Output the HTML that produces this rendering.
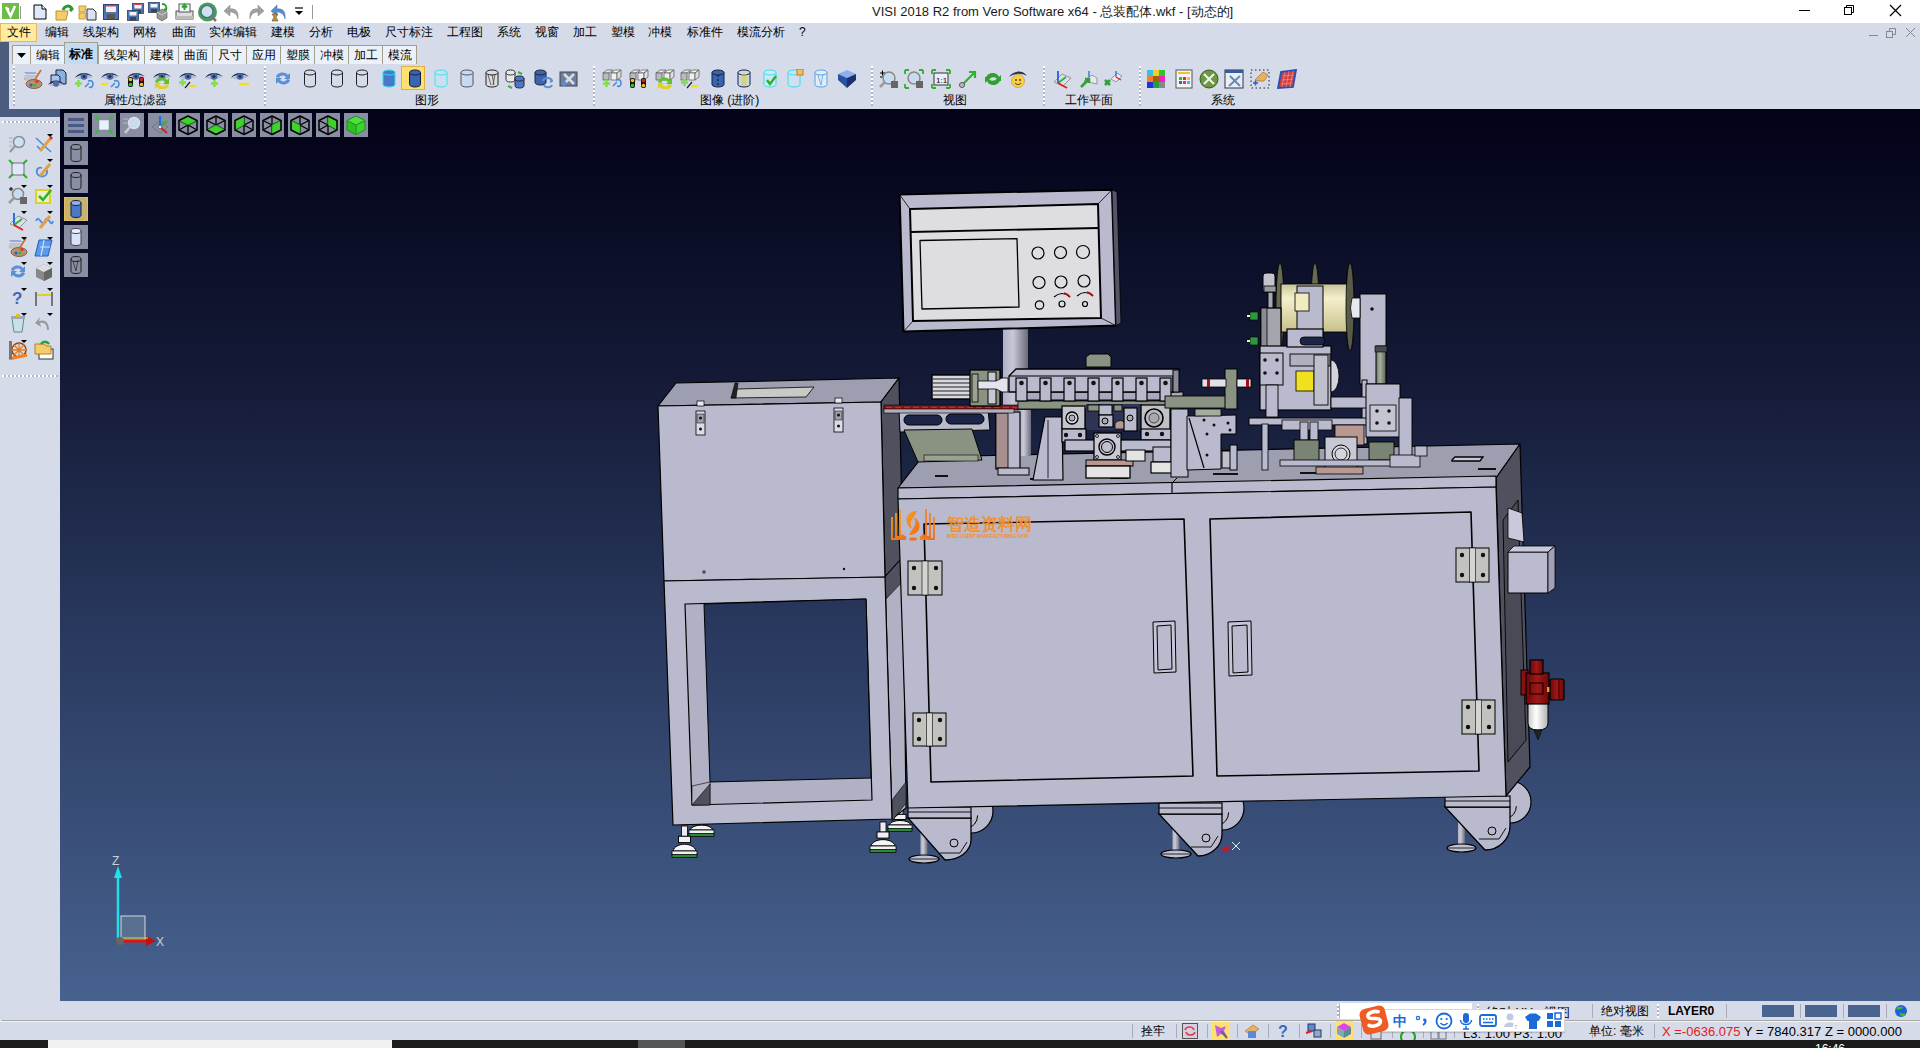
<!DOCTYPE html>
<html><head><meta charset="utf-8">
<style>
*{margin:0;padding:0;box-sizing:border-box}
html,body{width:1920px;height:1048px;overflow:hidden;background:#d6dbe9;font-family:"Liberation Sans",sans-serif;font-size:12px;color:#000}
.a{position:absolute}
.t{position:absolute;white-space:nowrap;line-height:1}
#vp{left:60px;top:109px;width:1860px;height:892px;background:linear-gradient(#020218 0%,#141a36 30%,#2a3a60 60%,#47628f 100%)}
.tab{position:absolute;top:45px;height:19px;background:#eaf1fa;border-left:1px solid #a39f8a;border-top:1px solid #a39f8a;font-size:12px;text-align:center;line-height:18px}
.grip{position:absolute;top:66px;height:40px;width:2px;background:repeating-linear-gradient(#fff 0 2px,#b0b4c4 2px 4px)}
.grh{position:absolute;height:2px;background:repeating-linear-gradient(90deg,#fff 0 2px,#b0b4c4 2px 4px)}
.lbl{position:absolute;top:93px;font-size:12px;line-height:14px;white-space:nowrap}
.sep{position:absolute;width:1px;background:#9ea3b3}
.vb{position:absolute;width:24px;height:24px;background:#8a8ea2}
.ic{position:absolute}

</style></head><body>
<div class="a" style="left:0px;top:0px;width:1920px;height:23px;background:#fff;"></div>
<div class="t" style="left:872px;top:5px;font-size:13px;color:#1a1a1a;">VISI 2018 R2 from Vero Software x64 - 总装配体.wkf - [动态的]</div>
<div class="a" style="left:1799px;top:10px;width:11px;height:1px;background:#000;"></div>
<svg class="ic" style="left:1843px;top:4px" width="12" height="12" viewBox="0 0 12 12"><rect x="1.5" y="3.5" width="7" height="7" fill="none" stroke="#000"/><path d="M3.5 3.5V1.5h7v7h-2" fill="none" stroke="#000"/></svg>
<svg class="ic" style="left:1889px;top:4px" width="13" height="13" viewBox="0 0 13 13"><path d="M1 1L12 12M12 1L1 12" stroke="#000" stroke-width="1.2"/></svg>
<svg class="ic" style="left:2px;top:3px" width="17" height="16" viewBox="0 0 17 16"><rect width="17" height="16" fill="#6cbd45"/><path d="M4 4l4.5 9L13 3" stroke="#fff" stroke-width="2.6" fill="none"/><circle cx="6" cy="6" r="1.3" fill="#fff"/></svg>
<div class="a" style="left:20px;top:6px;width:1px;height:13px;background:#999;"></div>
<svg class="ic" style="left:33px;top:4px" width="14" height="16" viewBox="0 0 14 16"><path d="M1 1h8l4 4v10H1z" fill="#dfe8f8" stroke="#000"/><path d="M9 1v4h4" fill="#fff" stroke="#000"/></svg>
<svg class="ic" style="left:55px;top:3px" width="19" height="18" viewBox="0 0 19 18"><path d="M1 8h12l-2 9H1z" fill="#f4cc6a" stroke="#c09030"/><path d="M8 7c2-5 7-5 9-1l-2 2" stroke="#2a9a2a" stroke-width="3" fill="none"/></svg>
<svg class="ic" style="left:78px;top:3px" width="19" height="18" viewBox="0 0 19 18"><path d="M1 3h7l-1 6H1zM1 10h7l-1 6H1z" fill="#f4cc6a" stroke="#c0a040"/><path d="M9 6h6l3 3v8H9z" fill="#d8e2f4" stroke="#333"/></svg>
<svg class="ic" style="left:103px;top:4px" width="16" height="16" viewBox="0 0 16 16"><rect x="0.5" y="0.5" width="15" height="15" fill="#4e73b0" stroke="#2a4070"/><rect x="3" y="1" width="10" height="7" fill="#f0f0f0"/><rect x="3" y="1" width="10" height="1.5" fill="#e04040"/><rect x="4" y="10" width="8" height="5" fill="#555"/></svg>
<svg class="ic" style="left:127px;top:2px" width="17" height="19" viewBox="0 0 17 19"><g transform="translate(5,1) scale(1)"><rect x="0.5" y="0.5" width="11" height="10" fill="#4e73b0" stroke="#2a4070" stroke-width="0.8"/><rect x="2.5" y="1" width="7" height="4.5" fill="#f4f4f4"/><rect x="2.5" y="1" width="7" height="1" fill="#e04040"/><rect x="3" y="7" width="6" height="3.5" fill="#444"/></g><g transform="translate(0,8) scale(1)"><rect x="0.5" y="0.5" width="11" height="10" fill="#4e73b0" stroke="#2a4070" stroke-width="0.8"/><rect x="2.5" y="1" width="7" height="4.5" fill="#f4f4f4"/><rect x="2.5" y="1" width="7" height="1" fill="#e04040"/><rect x="3" y="7" width="6" height="3.5" fill="#444"/></g></svg>
<svg class="ic" style="left:148px;top:2px" width="21" height="20" viewBox="0 0 21 20"><g transform="translate(0,0) scale(1)"><rect x="0.5" y="0.5" width="11" height="10" fill="#4e73b0" stroke="#2a4070" stroke-width="0.8"/><rect x="2.5" y="1" width="7" height="4.5" fill="#f4f4f4"/><rect x="2.5" y="1" width="7" height="1" fill="#e04040"/><rect x="3" y="7" width="6" height="3.5" fill="#444"/></g><path d="M9 10l5-3 5 3v6l-5 3-5-3z" fill="#999" stroke="#555" stroke-width="0.6"/><path d="M9 10l5 3 5-3" fill="none" stroke="#ddd" stroke-width="0.8"/><path d="M14 2c4 0 5 3 4 6l-2-1" stroke="#2a9a2a" stroke-width="1.8" fill="none"/></svg>
<svg class="ic" style="left:175px;top:2px" width="19" height="19" viewBox="0 0 19 19"><rect x="1" y="9" width="17" height="8" fill="#ddd" stroke="#555"/><rect x="1" y="14" width="17" height="3" fill="#bbb"/><rect x="4" y="2" width="11" height="8" fill="#f4f8ff" stroke="#555"/><path d="M9.5 8V3M7 5.5l2.5-3 2.5 3" stroke="#20b020" stroke-width="2" fill="none"/></svg>
<svg class="ic" style="left:197px;top:2px" width="21" height="20" viewBox="0 0 21 20"><circle cx="10.5" cy="10" r="9.5" fill="#4a9a5a"/><circle cx="10" cy="9.5" r="6" fill="#cfe0f0" stroke="#3a6a8a" stroke-width="1.2"/><path d="M14 14l5 5" stroke="#777" stroke-width="2.5"/></svg>
<svg class="ic" style="left:223px;top:2px" width="18" height="19" viewBox="0 0 18 19"><path d="M15 17c1-7-2-11-8-10V3L1 9l6 5v-4c4 0 7 2 8 7z" fill="#a0a0a0" stroke="#888" stroke-width="0.5"/></svg>
<svg class="ic" style="left:247px;top:2px" width="18" height="19" viewBox="0 0 18 19"><path d="M3 17c-1-7 2-11 8-10V3l6 6-6 5v-4c-4 0-7 2-8 7z" fill="#a0a0a0" stroke="#888" stroke-width="0.5"/></svg>
<svg class="ic" style="left:269px;top:2px" width="20" height="20" viewBox="0 0 20 20"><path d="M16 17c1-7-2-11-8-10V3L2 9l6 5v-4c4 0 7 2 8 7z" fill="#5a8ad0" stroke="#4070b0" stroke-width="0.5"/><path d="M3 12h6l-2 3 2 4H3l2-4z" fill="#b89050" stroke="#705020" stroke-width="0.6"/></svg>
<svg class="ic" style="left:294px;top:7px" width="10" height="9" viewBox="0 0 10 9"><path d="M1 1h8" stroke="#000" stroke-width="1.2"/><path d="M1 4h8L5 8z" fill="#000"/></svg>
<div class="a" style="left:312px;top:5px;width:1px;height:14px;background:#999;"></div>
<div class="a" style="left:0px;top:23px;width:1920px;height:19px;background:#d6dbe9;"></div>
<div class="a" style="left:0px;top:23px;width:37px;height:19px;background:#ffeba0;border:1px solid #e8b860"></div>
<div class="t" style="left:7px;top:26px;font-size:12px;color:#000;">文件</div>
<div class="t" style="left:45px;top:26px;font-size:12px;color:#000;">编辑</div>
<div class="t" style="left:83px;top:26px;font-size:12px;color:#000;">线架构</div>
<div class="t" style="left:133px;top:26px;font-size:12px;color:#000;">网格</div>
<div class="t" style="left:172px;top:26px;font-size:12px;color:#000;">曲面</div>
<div class="t" style="left:209px;top:26px;font-size:12px;color:#000;">实体编辑</div>
<div class="t" style="left:271px;top:26px;font-size:12px;color:#000;">建模</div>
<div class="t" style="left:309px;top:26px;font-size:12px;color:#000;">分析</div>
<div class="t" style="left:347px;top:26px;font-size:12px;color:#000;">电极</div>
<div class="t" style="left:385px;top:26px;font-size:12px;color:#000;">尺寸标注</div>
<div class="t" style="left:447px;top:26px;font-size:12px;color:#000;">工程图</div>
<div class="t" style="left:497px;top:26px;font-size:12px;color:#000;">系统</div>
<div class="t" style="left:535px;top:26px;font-size:12px;color:#000;">视窗</div>
<div class="t" style="left:573px;top:26px;font-size:12px;color:#000;">加工</div>
<div class="t" style="left:611px;top:26px;font-size:12px;color:#000;">塑模</div>
<div class="t" style="left:648px;top:26px;font-size:12px;color:#000;">冲模</div>
<div class="t" style="left:687px;top:26px;font-size:12px;color:#000;">标准件</div>
<div class="t" style="left:737px;top:26px;font-size:12px;color:#000;">模流分析</div>
<div class="t" style="left:799px;top:26px;font-size:12px;color:#000;">?</div>
<div class="a" style="left:1869px;top:35px;width:9px;height:1px;background:#888;"></div>
<svg class="ic" style="left:1886px;top:28px" width="11" height="10" viewBox="0 0 11 10"><rect x="0.5" y="3.5" width="6" height="6" fill="none" stroke="#888"/><path d="M3.5 3.5V0.5h6v6h-3" fill="none" stroke="#888"/></svg>
<svg class="ic" style="left:1905px;top:27px" width="11" height="11" viewBox="0 0 11 11"><path d="M1 1L10 10M10 1L1 10" stroke="#888"/></svg>
<div class="a" style="left:0px;top:42px;width:9px;height:75px;background:#4b5c7e;"></div>
<div class="a" style="left:9px;top:109px;width:51px;height:8px;background:#4b5c7e;"></div>
<div class="tab" style="left:12px;width:18px"><svg width="10" height="6" style="margin-top:6px"><path d="M0 0h9L4.5 5z" fill="#000"/></svg></div>
<div class="tab" style="left:30px;width:34px">编辑</div>
<div class="tab" style="left:64px;top:42px;height:22px;width:34px;background:#c3dcf4;border-right:1px solid #a39f8a;line-height:22px;font-weight:bold">标准</div>
<div class="tab" style="left:98px;width:46px">线架构</div>
<div class="tab" style="left:144px;width:34px">建模</div>
<div class="tab" style="left:178px;width:34px">曲面</div>
<div class="tab" style="left:212px;width:34px">尺寸</div>
<div class="tab" style="left:246px;width:34px">应用</div>
<div class="tab" style="left:280px;width:34px">塑膜</div>
<div class="tab" style="left:314px;width:34px">冲模</div>
<div class="tab" style="left:348px;width:34px">加工</div>
<div class="tab" style="left:382px;width:34px">模流</div>
<div class="a" style="left:416px;top:45px;width:1px;height:19px;background:#a39f8a;"></div>
<div class="grip" style="left:13px"></div>
<div class="grip" style="left:264px"></div>
<div class="grip" style="left:593px"></div>
<div class="grip" style="left:871px"></div>
<div class="grip" style="left:1043px"></div>
<div class="grip" style="left:1139px"></div>
<div class="lbl" style="left:104px">属性/过滤器</div>
<div class="lbl" style="left:415px">图形</div>
<div class="lbl" style="left:700px">图像 (进阶)</div>
<div class="lbl" style="left:943px">视图</div>
<div class="lbl" style="left:1065px">工作平面</div>
<div class="lbl" style="left:1211px">系统</div>
<svg class="ic" style="left:23px;top:69px" width="20" height="20" viewBox="0 0 20 20"><path d="M1 3h11l3 2H3z" fill="#9aa8e0"/><path d="M1 6h11l2 2H2z" fill="#c0c0d0"/><path d="M1 9h10l2 2H2z" fill="#d8d8d8" stroke="#888" stroke-width="0.5"/><ellipse cx="11" cy="15" rx="8" ry="4.5" fill="#b89070" stroke="#705040" stroke-width="0.8"/><circle cx="8" cy="16" r="1.6" fill="#2060e0"/><circle cx="12" cy="16" r="1.6" fill="#20c040"/><circle cx="14" cy="12.5" r="1.6" fill="#e03030"/><path d="M18 1L11 12" stroke="#c07030" stroke-width="1.6"/></svg>
<svg class="ic" style="left:48px;top:69px" width="20" height="20" viewBox="0 0 20 20"><path d="M8 1h7l3 3v11H8z" fill="#8ab0e8" stroke="#222"/><path d="M3 6h7l2 2v8H3z" fill="#a8c4f0" stroke="#222"/><g transform="translate(-1,8) scale(0.9)"><path d="M1 9C4 3 14 2 19 8C14 5 6 5 1 9z" fill="#253050"/><path d="M2 9C6 6 14 6 18 8C14 11 6 11 2 9z" fill="#b8bce0"/><circle cx="10" cy="7.5" r="3.3" fill="#4b6c9c"/></g></svg>
<svg class="ic" style="left:74px;top:69px" width="20" height="20" viewBox="0 0 20 20"><g transform="translate(0,0)"><path d="M1 9C4 3 14 2 19 8C14 5 6 5 1 9z" fill="#253050"/><path d="M2 9C6 6 14 6 18 8C14 11 6 11 2 9z" fill="#b8bce0"/><circle cx="10" cy="7.5" r="3.3" fill="#4b6c9c"/><circle cx="10" cy="7.5" r="1.3" fill="#1a2540"/></g><path d="M1 14.5h7M4.5 11v7" stroke="#80e040" stroke-width="2.4"/><path d="M11 18l4-4M14 12c3-1 5 0 5 3s-2 4-4 3" stroke="#4a8ae0" stroke-width="1.6" fill="none"/></svg>
<svg class="ic" style="left:100px;top:69px" width="20" height="20" viewBox="0 0 20 20"><g transform="translate(0,0)"><path d="M1 9C4 3 14 2 19 8C14 5 6 5 1 9z" fill="#253050"/><path d="M2 9C6 6 14 6 18 8C14 11 6 11 2 9z" fill="#b8bce0"/><circle cx="10" cy="7.5" r="3.3" fill="#4b6c9c"/><circle cx="10" cy="7.5" r="1.3" fill="#1a2540"/></g><path d="M1 15h7" stroke="#f0e020" stroke-width="2.4"/><path d="M11 18l4-4M14 12c3-1 5 0 5 3s-2 4-4 3" stroke="#4a8ae0" stroke-width="1.6" fill="none"/></svg>
<svg class="ic" style="left:126px;top:69px" width="20" height="20" viewBox="0 0 20 20"><g transform="translate(0,0)"><path d="M1 9C4 3 14 2 19 8C14 5 6 5 1 9z" fill="#253050"/><path d="M2 9C6 6 14 6 18 8C14 11 6 11 2 9z" fill="#b8bce0"/><circle cx="10" cy="7.5" r="3.3" fill="#4b6c9c"/><circle cx="10" cy="7.5" r="1.3" fill="#1a2540"/></g><rect x="2" y="8" width="5" height="10" rx="2" fill="#111"/><circle cx="4.5" cy="10.5" r="1.8" fill="#f0c020"/><circle cx="4.5" cy="15.5" r="1.8" fill="#20d020"/><rect x="13" y="8" width="5" height="10" rx="2" fill="#111"/><circle cx="15.5" cy="10.5" r="1.8" fill="#e02020"/><circle cx="15.5" cy="15.5" r="1.8" fill="#f0c020"/></svg>
<svg class="ic" style="left:152px;top:69px" width="20" height="20" viewBox="0 0 20 20"><g transform="translate(0,0)"><path d="M1 9C4 3 14 2 19 8C14 5 6 5 1 9z" fill="#253050"/><path d="M2 9C6 6 14 6 18 8C14 11 6 11 2 9z" fill="#b8bce0"/><circle cx="10" cy="7.5" r="3.3" fill="#4b6c9c"/><circle cx="10" cy="7.5" r="1.3" fill="#1a2540"/></g><path d="M3 13c1-5 9-6 12-2l2-2v6h-6l2-2c-2-2-6-2-7 1z" fill="#60c030"/><path d="M17 16c-1 5-9 6-12 2l-2 2v-6h6l-2 2c2 2 6 2 7-1z" fill="#e0d020"/></svg>
<svg class="ic" style="left:178px;top:69px" width="20" height="20" viewBox="0 0 20 20"><g transform="translate(0,0)"><path d="M1 9C4 3 14 2 19 8C14 5 6 5 1 9z" fill="#253050"/><path d="M2 9C6 6 14 6 18 8C14 11 6 11 2 9z" fill="#b8bce0"/><circle cx="10" cy="7.5" r="3.3" fill="#4b6c9c"/><circle cx="10" cy="7.5" r="1.3" fill="#1a2540"/></g><path d="M1 13.5h7M4.5 10v7" stroke="#80e040" stroke-width="2.4"/><path d="M7 19l5-6" stroke="#222" stroke-width="1.2"/><path d="M11 17h7" stroke="#f0e020" stroke-width="2.4"/></svg>
<svg class="ic" style="left:204px;top:69px" width="20" height="20" viewBox="0 0 20 20"><g transform="translate(0,0)"><path d="M1 9C4 3 14 2 19 8C14 5 6 5 1 9z" fill="#253050"/><path d="M2 9C6 6 14 6 18 8C14 11 6 11 2 9z" fill="#b8bce0"/><circle cx="10" cy="7.5" r="3.3" fill="#4b6c9c"/><circle cx="10" cy="7.5" r="1.3" fill="#1a2540"/></g><path d="M7 14.5h7M10.5 11v7" stroke="#80e040" stroke-width="2.4"/></svg>
<svg class="ic" style="left:230px;top:69px" width="20" height="20" viewBox="0 0 20 20"><g transform="translate(0,0)"><path d="M1 9C4 3 14 2 19 8C14 5 6 5 1 9z" fill="#253050"/><path d="M2 9C6 6 14 6 18 8C14 11 6 11 2 9z" fill="#b8bce0"/><circle cx="10" cy="7.5" r="3.3" fill="#4b6c9c"/><circle cx="10" cy="7.5" r="1.3" fill="#1a2540"/></g><path d="M9 15h10" stroke="#f0e020" stroke-width="2.4"/></svg>
<svg class="ic" style="left:273px;top:69px" width="20" height="20" viewBox="0 0 20 20"><path d="M3 8c1-5 9-6 12-2l2-2v6h-6l2-2c-2-2-6-2-7 1z" fill="#5a90d8"/><path d="M17 11c-1 5-9 6-12 2l-2 2v-6h6l-2 2c2 2 6 2 7-1z" fill="#5a90d8"/></svg>
<svg class="ic" style="left:300px;top:69px" width="20" height="20" viewBox="0 0 20 20"><path d="M4.5 3.5v12.0a5.5 2.5 0 0 0 11 0v-12.0" fill="none" stroke="#222"/><ellipse cx="10.0" cy="3.5" rx="5.5" ry="2.5" fill="none" stroke="#222"/></svg>
<svg class="ic" style="left:327px;top:69px" width="20" height="20" viewBox="0 0 20 20"><path d="M4.5 3.5v12.0a5.5 2.5 0 0 0 11 0v-12.0" fill="none" stroke="#222"/><ellipse cx="10.0" cy="3.5" rx="5.5" ry="2.5" fill="none" stroke="#222"/></svg>
<svg class="ic" style="left:352px;top:69px" width="20" height="20" viewBox="0 0 20 20"><path d="M4.5 3.5v12.0a5.5 2.5 0 0 0 11 0v-12.0" fill="none" stroke="#222"/><ellipse cx="10.0" cy="3.5" rx="5.5" ry="2.5" fill="none" stroke="#222"/></svg>
<svg class="ic" style="left:379px;top:69px" width="20" height="20" viewBox="0 0 20 20"><path d="M4 3.5v12.0a6.0 2.5 0 0 0 12 0v-12.0" fill="#4a78c8" stroke="#30e0f0"/><ellipse cx="10.0" cy="3.5" rx="6.0" ry="2.5" fill="#4a78c8" stroke="#30e0f0"/></svg>
<div class="a" style="left:401px;top:66px;width:24px;height:24px;background:#ffe070;border:1px solid #e0b040"></div>
<svg class="ic" style="left:405px;top:69px" width="20" height="20" viewBox="0 0 20 20"><path d="M4.5 3.5v12.0a5.5 2.5 0 0 0 11 0v-12.0" fill="#3a64b0" stroke="#102040"/><ellipse cx="10.0" cy="3.5" rx="5.5" ry="2.5" fill="#3a64b0" stroke="#102040"/></svg>
<svg class="ic" style="left:431px;top:69px" width="20" height="20" viewBox="0 0 20 20"><path d="M4 3.5v12.0a6.0 2.5 0 0 0 12 0v-12.0" fill="#c8e0f0" stroke="#40e0f0"/><ellipse cx="10.0" cy="3.5" rx="6.0" ry="2.5" fill="#c8e0f0" stroke="#40e0f0"/></svg>
<svg class="ic" style="left:457px;top:69px" width="20" height="20" viewBox="0 0 20 20"><path d="M4 3.5v12.0a6.0 2.5 0 0 0 12 0v-12.0" fill="#c8d8f0" stroke="#556"/><ellipse cx="10.0" cy="3.5" rx="6.0" ry="2.5" fill="#c8d8f0" stroke="#556"/></svg>
<svg class="ic" style="left:482px;top:69px" width="20" height="20" viewBox="0 0 20 20"><path d="M4 3.5v12.0a6.0 2.5 0 0 0 12 0v-12.0" fill="#ddd" stroke="#222"/><ellipse cx="10.0" cy="3.5" rx="6.0" ry="2.5" fill="#ddd" stroke="#222"/><path d="M6 6l3 10M10 5l2 11M13 5l-2 11" stroke="#444" stroke-width="0.8"/></svg>
<svg class="ic" style="left:505px;top:69px" width="20" height="20" viewBox="0 0 20 20"><path d="M1 3.5v7.0a4.5 2.5 0 0 0 9 0v-7.0" fill="#e8e8e8" stroke="#333"/><ellipse cx="5.5" cy="3.5" rx="4.5" ry="2.5" fill="#e8e8e8" stroke="#333"/><path d="M10 9.5v7.0a4.5 2.5 0 0 0 9 0v-7.0" fill="#4a78c8" stroke="#223"/><ellipse cx="14.5" cy="9.5" rx="4.5" ry="2.5" fill="#4a78c8" stroke="#223"/><path d="M13 3l4 2" stroke="#40b040" stroke-width="2"/><path d="M3 17l4 2" stroke="#40b040" stroke-width="2"/></svg>
<svg class="ic" style="left:533px;top:69px" width="20" height="20" viewBox="0 0 20 20"><path d="M2 3.5v10.0a5.5 2.5 0 0 0 11 0v-10.0" fill="#3a64b0" stroke="#223"/><ellipse cx="7.5" cy="3.5" rx="5.5" ry="2.5" fill="#3a64b0" stroke="#223"/><path d="M10 12c1-4 8-4 9 0l-2 1M19 16c-1 3-7 3-8 0" stroke="#5a90d8" stroke-width="2" fill="none"/></svg>
<svg class="ic" style="left:559px;top:69px" width="20" height="20" viewBox="0 0 20 20"><rect x="1" y="3" width="17" height="14" fill="#6a7ea0" stroke="#445"/><path d="M4 16L15 5M5 5l10 10" stroke="#ddd" stroke-width="2.5"/><path d="M4 16l3-3" stroke="#4a8ae0" stroke-width="3"/></svg>
<svg class="ic" style="left:602px;top:69px" width="20" height="20" viewBox="0 0 20 20"><path d="M1 4l4-3h6l-4 3z" fill="#e8e8e8" stroke="#555" stroke-width="0.7"/><rect x="1" y="4" width="6" height="7" fill="#bbb" stroke="#555" stroke-width="0.7"/><path d="M9 4l4-3h6l-4 3z" fill="#f4f4f4" stroke="#555" stroke-width="0.7"/><rect x="9" y="4" width="6" height="7" fill="#f0f0f0" stroke="#555" stroke-width="0.7"/><path d="M15 4l4-3v7l-4 3z" fill="#ddd" stroke="#555" stroke-width="0.7"/><path d="M1 14.5h7M4.5 11v7" stroke="#80e040" stroke-width="2.4"/><path d="M11 17l4-4M14 11c3-1 5 0 5 3s-2 4-4 3" stroke="#4a8ae0" stroke-width="1.6" fill="none"/></svg>
<svg class="ic" style="left:629px;top:69px" width="20" height="20" viewBox="0 0 20 20"><path d="M1 4l4-3h6l-4 3z" fill="#e8e8e8" stroke="#555" stroke-width="0.7"/><rect x="1" y="4" width="6" height="7" fill="#bbb" stroke="#555" stroke-width="0.7"/><path d="M9 4l4-3h6l-4 3z" fill="#f4f4f4" stroke="#555" stroke-width="0.7"/><rect x="9" y="4" width="6" height="7" fill="#f0f0f0" stroke="#555" stroke-width="0.7"/><path d="M15 4l4-3v7l-4 3z" fill="#ddd" stroke="#555" stroke-width="0.7"/><rect x="1" y="9" width="5" height="10" rx="2" fill="#111"/><circle cx="3.5" cy="11.5" r="1.8" fill="#f0c020"/><circle cx="3.5" cy="16.5" r="1.8" fill="#20d020"/><rect x="12" y="9" width="5" height="10" rx="2" fill="#111"/><circle cx="14.5" cy="11.5" r="1.8" fill="#e02020"/><circle cx="14.5" cy="16.5" r="1.8" fill="#f0c020"/></svg>
<svg class="ic" style="left:655px;top:69px" width="20" height="20" viewBox="0 0 20 20"><path d="M1 4l4-3h6l-4 3z" fill="#e8e8e8" stroke="#555" stroke-width="0.7"/><rect x="1" y="4" width="6" height="7" fill="#bbb" stroke="#555" stroke-width="0.7"/><path d="M9 4l4-3h6l-4 3z" fill="#f4f4f4" stroke="#555" stroke-width="0.7"/><rect x="9" y="4" width="6" height="7" fill="#f0f0f0" stroke="#555" stroke-width="0.7"/><path d="M15 4l4-3v7l-4 3z" fill="#ddd" stroke="#555" stroke-width="0.7"/><path d="M3 13c1-5 9-6 12-2l2-2v6h-6l2-2c-2-2-6-2-7 1z" fill="#60c030"/><path d="M17 16c-1 5-9 6-12 2l-2 2v-6h6l-2 2c2 2 6 2 7-1z" fill="#e0d020"/></svg>
<svg class="ic" style="left:680px;top:69px" width="20" height="20" viewBox="0 0 20 20"><path d="M1 4l4-3h6l-4 3z" fill="#e8e8e8" stroke="#555" stroke-width="0.7"/><rect x="1" y="4" width="6" height="7" fill="#bbb" stroke="#555" stroke-width="0.7"/><path d="M9 4l4-3h6l-4 3z" fill="#f4f4f4" stroke="#555" stroke-width="0.7"/><rect x="9" y="4" width="6" height="7" fill="#f0f0f0" stroke="#555" stroke-width="0.7"/><path d="M15 4l4-3v7l-4 3z" fill="#ddd" stroke="#555" stroke-width="0.7"/><path d="M1 13.5h7M4.5 10v7" stroke="#80e040" stroke-width="2.4"/><path d="M7 19l5-6" stroke="#222" stroke-width="1.2"/><path d="M11 17h7" stroke="#f0e020" stroke-width="2.4"/></svg>
<svg class="ic" style="left:708px;top:69px" width="20" height="20" viewBox="0 0 20 20"><path d="M4 3.5v12.0a6.0 2.5 0 0 0 12 0v-12.0" fill="#3a64b0" stroke="#102040"/><ellipse cx="10.0" cy="3.5" rx="6.0" ry="2.5" fill="#3a64b0" stroke="#102040"/><path d="M10 6v10" stroke="#111" stroke-dasharray="2 2"/></svg>
<svg class="ic" style="left:734px;top:69px" width="20" height="20" viewBox="0 0 20 20"><path d="M4 3.5v12.0a6.0 2.5 0 0 0 12 0v-12.0" fill="#c8d8f0" stroke="#102040"/><ellipse cx="10.0" cy="3.5" rx="6.0" ry="2.5" fill="#c8d8f0" stroke="#102040"/><path d="M8 5v12M10 5v12M12 5v12" stroke="#e0d020" stroke-width="1"/></svg>
<svg class="ic" style="left:760px;top:69px" width="20" height="20" viewBox="0 0 20 20"><path d="M4 3.5v12.0a6.0 2.5 0 0 0 12 0v-12.0" fill="#d0e8f4" stroke="#30e0f0"/><ellipse cx="10.0" cy="3.5" rx="6.0" ry="2.5" fill="#d0e8f4" stroke="#30e0f0"/><path d="M7 11l3 4 6-8" stroke="#30b030" stroke-width="2.5" fill="none"/></svg>
<svg class="ic" style="left:784px;top:69px" width="20" height="20" viewBox="0 0 20 20"><path d="M4 3.5v12.0a6.0 2.5 0 0 0 12 0v-12.0" fill="#d0e0f0" stroke="#30e0f0"/><ellipse cx="10.0" cy="3.5" rx="6.0" ry="2.5" fill="#d0e0f0" stroke="#30e0f0"/><rect x="13" y="0" width="6" height="6" fill="#f0c060" stroke="#d07020"/></svg>
<svg class="ic" style="left:811px;top:69px" width="20" height="20" viewBox="0 0 20 20"><path d="M4 3.5v12.0a6.0 2.5 0 0 0 12 0v-12.0" fill="#e0ecf8" stroke="#5aa0e0"/><ellipse cx="10.0" cy="3.5" rx="6.0" ry="2.5" fill="#e0ecf8" stroke="#5aa0e0"/><path d="M7 6l3 10M12 5l-2 11" stroke="#5aa0e0" stroke-width="0.8"/></svg>
<svg class="ic" style="left:837px;top:69px" width="20" height="20" viewBox="0 0 20 20"><path d="M1 5l9-4 9 4-9 4z" fill="#8ab0f0"/><path d="M1 5l9 4v10L1 11z" fill="#2a50a0"/><path d="M19 5l-9 4v10l9-8z" fill="#1a3070"/></svg>
<svg class="ic" style="left:879px;top:69px" width="20" height="20" viewBox="0 0 20 20"><path d="M1 4h5M3.5 1.5v5M1 8h5" stroke="#000" stroke-width="1"/><circle cx="10" cy="9" r="6" fill="#c8dcf0" stroke="#888" stroke-width="1.5"/><path d="M6 13l-5 5" stroke="#999" stroke-width="2.5"/><rect x="12" y="12" width="7" height="7" fill="#666"/></svg>
<svg class="ic" style="left:904px;top:69px" width="20" height="20" viewBox="0 0 20 20"><circle cx="10" cy="9" r="6" fill="#c8dcf0" stroke="#888" stroke-width="1.5"/><rect x="12" y="12" width="7" height="7" fill="#666"/><path d="M1 1h4M1 1v4M19 1h-4M19 1v4M1 19h4M1 19v-4" stroke="#30b030" stroke-width="1.8"/></svg>
<svg class="ic" style="left:931px;top:69px" width="20" height="20" viewBox="0 0 20 20"><rect x="3" y="4" width="14" height="12" fill="#e8eef8" stroke="#333"/><text x="5" y="14" font-size="8" font-family="Liberation Sans">1:1</text><path d="M1 1h4M1 1v4M19 1h-4M19 1v4M1 19h4M1 19v-4M19 19h-4M19 19v-4" stroke="#30b030" stroke-width="1.8"/></svg>
<svg class="ic" style="left:958px;top:69px" width="20" height="20" viewBox="0 0 20 20"><path d="M4 16L17 3M11 3h6v6" stroke="#30b030" stroke-width="2.2" fill="none"/><circle cx="4" cy="16" r="2.5" fill="#bbb" stroke="#555"/></svg>
<svg class="ic" style="left:983px;top:69px" width="20" height="20" viewBox="0 0 20 20"><path d="M3 9c1-6 11-7 13-1l2-2v6h-6l2-2c-2-3-7-2-8 1zM17 11c-1 6-11 7-13 1l-2 2v-6h6l-2 2c2 3 7 2 8-1z" fill="#30a030"/></svg>
<svg class="ic" style="left:1008px;top:69px" width="20" height="20" viewBox="0 0 20 20"><path d="M1 8C5 1 15 1 19 7C14 4 6 4 1 8z" fill="#253050"/><circle cx="10" cy="12" r="6.5" fill="#f8d040" stroke="#c09020" stroke-width="0.6"/><circle cx="8" cy="11" r="0.9" fill="#333"/><circle cx="12" cy="11" r="0.9" fill="#333"/><path d="M7 14c2 2 4 2 6 0" stroke="#333" fill="none"/></svg>
<svg class="ic" style="left:1052px;top:69px" width="20" height="20" viewBox="0 0 20 20"><path d="M2 13l8-8 9 4-8 8z" fill="#d8e0ec" stroke="#777" stroke-width="0.7"/><path d="M6 14V2" stroke="#2060e0" stroke-width="1.8"/><path d="M6 14l8-6" stroke="#30b030" stroke-width="1.8"/><path d="M6 14l9 5" stroke="#e02020" stroke-width="1.8"/></svg>
<svg class="ic" style="left:1078px;top:69px" width="20" height="20" viewBox="0 0 20 20"><path d="M6 12l8-6 5 3v6z" fill="#e8e8ec" stroke="#777" stroke-width="0.7"/><path d="M3 18l8-8M7 10h4v4" stroke="#30a030" stroke-width="2.5" fill="none"/><path d="M11 8V2" stroke="#2060e0" stroke-width="1.2"/></svg>
<svg class="ic" style="left:1103px;top:69px" width="20" height="20" viewBox="0 0 20 20"><path d="M8 10l6-6 5 3-6 6z" fill="#e8e8ec" stroke="#777" stroke-width="0.7"/><path d="M2 11l5 5M2 16l5-5" stroke="#30a030" stroke-width="2.5"/><path d="M13 8V2" stroke="#2060e0" stroke-width="1.2"/><path d="M13 8l5 3" stroke="#e02020" stroke-width="1.2"/></svg>
<svg class="ic" style="left:1146px;top:69px" width="20" height="20" viewBox="0 0 20 20"><rect x="1" y="1" width="6" height="6" fill="#30c0f0"/><rect x="7" y="1" width="6" height="6" fill="#f0d020"/><rect x="13" y="1" width="6" height="6" fill="#30c030"/><rect x="1" y="7" width="6" height="6" fill="#f08020"/><rect x="7" y="7" width="6" height="6" fill="#a06010"/><rect x="13" y="7" width="6" height="6" fill="#f020c0"/><rect x="1" y="13" width="6" height="6" fill="#2030e0"/><rect x="7" y="13" width="6" height="6" fill="#20a040"/><rect x="13" y="13" width="6" height="6" fill="#888"/></svg>
<svg class="ic" style="left:1174px;top:69px" width="20" height="20" viewBox="0 0 20 20"><rect x="2" y="1" width="16" height="18" fill="#f4f4f0" stroke="#555"/><rect x="4" y="3" width="12" height="2" fill="#f0c040"/><rect x="5" y="8" width="3" height="3" fill="#30c030"/><rect x="9" y="8" width="3" height="3" fill="#e03030"/><rect x="13" y="8" width="3" height="3" fill="#f0c040"/><rect x="5" y="12" width="3" height="3" fill="#3060e0"/><rect x="9" y="12" width="3" height="3" fill="#f020c0"/><rect x="13" y="12" width="3" height="3" fill="#30c0f0"/></svg>
<svg class="ic" style="left:1199px;top:69px" width="20" height="20" viewBox="0 0 20 20"><circle cx="10" cy="10" r="9" fill="#6a9a40" stroke="#3a5a20"/><path d="M5 15L15 5M5 5l10 10" stroke="#eee" stroke-width="2.2"/></svg>
<svg class="ic" style="left:1224px;top:69px" width="20" height="20" viewBox="0 0 20 20"><rect x="1" y="1" width="18" height="18" fill="#e8eef8" stroke="#334"/><rect x="1" y="1" width="18" height="3" fill="#3a5a9a"/><path d="M5 17L16 7M6 7l10 10" stroke="#6a8ab0" stroke-width="2"/></svg>
<svg class="ic" style="left:1250px;top:69px" width="20" height="20" viewBox="0 0 20 20"><path d="M1 1h18v18H1z" fill="none" stroke="#222" stroke-dasharray="1.5 2.5"/><path d="M5 11l8-8 5 3-4 6h-6z" fill="#e8b060" stroke="#a07030" stroke-width="0.7"/><path d="M3 14h5M5.5 11.5v5" stroke="#2060e0" stroke-width="1.5"/></svg>
<svg class="ic" style="left:1277px;top:69px" width="20" height="20" viewBox="0 0 20 20"><path d="M4 3l15-2-3 17-15 1z" fill="#d04040" stroke="#2a50b0" stroke-width="1.8"/><path d="M6 7l11-1M5 11l11-1M4 15l11-1M8 3l-3 15M12 2l-3 16M16 2l-3 16" stroke="#f4a0a0" stroke-width="0.6"/></svg><div class="a" id="vp"></div><svg class="a" style="left:0;top:0" width="1920" height="1048" viewBox="0 0 1920 1048"><defs><linearGradient id="g1" gradientUnits="userSpaceOnUse" x1="0" y1="109" x2="0" y2="1001"><stop offset="0" stop-color="#020218"/><stop offset="0.3" stop-color="#141a36"/><stop offset="0.6" stop-color="#2a3a60"/><stop offset="1" stop-color="#47628f"/></linearGradient></defs><rect x="897.0" y="806" width="6" height="8.58" fill="#ececf2" stroke="#000" stroke-width="0.8" />
<rect x="894.0" y="814.32" width="12" height="5.2" fill="#f0f0f4" stroke="#000" stroke-width="1" />
<path d="M889 825C891 819.0 909 819.0 911 825z" fill="#f4f4f6" stroke="#000" stroke-width="1"/>
<rect x="888" y="825" width="24" height="4" fill="#f0f0f2" stroke="#000" stroke-width="0.8"/>
<rect x="888" y="828.5" width="24" height="3" fill="#2a8a3a" stroke="#000" stroke-width="0.7"/>
<rect x="698.5" y="810" width="6" height="8.91" fill="#ececf2" stroke="#000" stroke-width="0.8" />
<rect x="695.5" y="818.64" width="12" height="5.4" fill="#f0f0f4" stroke="#000" stroke-width="1" />
<path d="M690 830C692 823.5 711 823.5 713 830z" fill="#f4f4f6" stroke="#000" stroke-width="1"/>
<rect x="689" y="830" width="25" height="4" fill="#f0f0f2" stroke="#000" stroke-width="0.8"/>
<rect x="689" y="833.5" width="25" height="3" fill="#2a8a3a" stroke="#000" stroke-width="0.7"/>
<polygon points="676,383 899,378 881,402 658,406" fill="#9d9eb0" stroke="#000" stroke-width="1.2" stroke-linejoin="round" />
<polygon points="881,402 899,378 903,557 885,577" fill="#50515e" stroke="#000" stroke-width="1.2" stroke-linejoin="round" />
<polygon points="658,406 881,402 885,577 664,581" fill="#b9bacd" stroke="#000" stroke-width="1.2" stroke-linejoin="round" />
<polygon points="737,389 814,387 806,397 731,398" fill="#c9cac6" stroke="#000" stroke-width="0.8" stroke-linejoin="round" />
<polygon points="731,398 735,383 738,383 736,398" fill="#222" stroke="#000" stroke-width="0.6" stroke-linejoin="round" />
<rect x="697" y="401" width="7" height="5" fill="#e8e8f0" stroke="#000" stroke-width="0.7" />
<rect x="696" y="411" width="9" height="24" fill="#dcdce6" stroke="#000" stroke-width="0.8" />
<rect x="697" y="414" width="7" height="9" fill="#a0a0b0" stroke="#000" stroke-width="0.5" />
<circle cx="700.5" cy="418" r="1.5" fill="#111" stroke="#000" stroke-width="0"/>
<circle cx="700.5" cy="429" r="1.5" fill="#111" stroke="#000" stroke-width="0"/>
<rect x="835" y="398" width="7" height="5" fill="#e8e8f0" stroke="#000" stroke-width="0.7" />
<rect x="834" y="408" width="9" height="24" fill="#dcdce6" stroke="#000" stroke-width="0.8" />
<rect x="835" y="411" width="7" height="9" fill="#a0a0b0" stroke="#000" stroke-width="0.5" />
<circle cx="838.5" cy="415" r="1.5" fill="#111" stroke="#000" stroke-width="0"/>
<circle cx="838.5" cy="426" r="1.5" fill="#111" stroke="#000" stroke-width="0"/>
<rect x="703" y="571" width="2" height="2" fill="none" stroke="#000" stroke-width="0.7" />
<circle cx="844" cy="569" r="1.2" fill="#111" stroke="#000" stroke-width="0"/>
<polygon points="885,577 903,557 906,808 892,819" fill="#b0b1c4" stroke="#000" stroke-width="1.2" stroke-linejoin="round" />
<polygon points="885,577 903,557 904,580 886,599" fill="#50515e" stroke="#000" stroke-width="0.6" stroke-linejoin="round" />
<polygon points="892,800 906,782 906,803 892,821" fill="#50515e" stroke="#000" stroke-width="0.6" stroke-linejoin="round" />
<polygon points="664,581 885,577 892,819 673,825" fill="#b9bacd" stroke="#000" stroke-width="1.2" stroke-linejoin="round" />
<polygon points="685,604 866,599 872,800 692,805" fill="#b0b1c4" stroke="#000" stroke-width="1.2" stroke-linejoin="round" />
<polygon points="704,604 866,599 871,778 710,782" fill="url(#g1)" stroke="#000" stroke-width="1" stroke-linejoin="round" />
<polygon points="692,786 710,782 710,805 692,805" fill="#b0b1c4" stroke="#000" stroke-width="0.6" stroke-linejoin="round" />
<polygon points="692,805 710,784 710,805" fill="#50515e" stroke="#000" stroke-width="0.6" stroke-linejoin="round" />
<rect x="681.5" y="826" width="6" height="10.56" fill="#ececf2" stroke="#000" stroke-width="0.8" />
<rect x="678.5" y="836.24" width="12" height="6.4" fill="#f0f0f4" stroke="#000" stroke-width="1" />
<path d="M673 851C675 842.0 694 842.0 696 851z" fill="#f4f4f6" stroke="#000" stroke-width="1"/>
<rect x="672" y="851" width="25" height="4" fill="#f0f0f2" stroke="#000" stroke-width="0.8"/>
<rect x="672" y="854.5" width="25" height="3" fill="#2a8a3a" stroke="#000" stroke-width="0.7"/>
<rect x="880.0" y="822" width="6" height="10.23" fill="#ececf2" stroke="#000" stroke-width="0.8" />
<rect x="877.0" y="831.92" width="12" height="6.2" fill="#f0f0f4" stroke="#000" stroke-width="1" />
<path d="M871 846C873 837.5 893 837.5 895 846z" fill="#f4f4f6" stroke="#000" stroke-width="1"/>
<rect x="870" y="846" width="26" height="4" fill="#f0f0f2" stroke="#000" stroke-width="0.8"/>
<rect x="870" y="849.5" width="26" height="3" fill="#2a8a3a" stroke="#000" stroke-width="0.7"/>
<circle cx="1510" cy="802" r="21" fill="#b9bacd" stroke="#000" stroke-width="1.2"/>
<path d="M1516.3 806.2a12.6 12.6 0 0 1 -10.5 12.6" fill="none" stroke="#000" stroke-width="1"/>
<rect x="1458.0" y="810" width="7" height="35" fill="url(#pole)" stroke="none"/>
<ellipse cx="1461.5" cy="848" rx="14.5" ry="4" fill="#c0c0d2" stroke="#000" stroke-width="1.2"/>
<path d="M1447 848h29" stroke="#000" stroke-width="0.8"/>
<path d="M1445 807H1510V826A25 24 0 0 1 1485 850z" fill="#b9bacd" stroke="#000" stroke-width="1.3"/>
<path d="M1506 828l-7 11h-20" fill="none" stroke="#000" stroke-width="0.9"/>
<rect x="1445" y="796" width="65" height="11" fill="#b9bacd" stroke="#000" stroke-width="1.2" />
<line x1="1445" y1="801" x2="1510" y2="801" stroke="#000" stroke-width="0.9"/>
<circle cx="1492" cy="831" r="4" fill="none" stroke="#000" stroke-width="1"/>
<circle cx="1222" cy="808" r="22" fill="#b9bacd" stroke="#000" stroke-width="1.2"/>
<path d="M1228.6 812.4a13.2 13.2 0 0 1 -11.0 13.2" fill="none" stroke="#000" stroke-width="1"/>
<rect x="1172.5" y="817" width="7" height="34" fill="url(#pole)" stroke="none"/>
<ellipse cx="1176.0" cy="854" rx="15.0" ry="4" fill="#c0c0d2" stroke="#000" stroke-width="1.2"/>
<path d="M1161 854h30" stroke="#000" stroke-width="0.8"/>
<path d="M1159 814H1222V834A24 22 0 0 1 1198 856z" fill="#b9bacd" stroke="#000" stroke-width="1.3"/>
<path d="M1218 836l-7 11h-20" fill="none" stroke="#000" stroke-width="0.9"/>
<rect x="1159" y="803" width="63" height="11" fill="#b9bacd" stroke="#000" stroke-width="1.2" />
<line x1="1159" y1="808" x2="1222" y2="808" stroke="#000" stroke-width="0.9"/>
<circle cx="1206" cy="838" r="4" fill="none" stroke="#000" stroke-width="1"/>
<circle cx="971" cy="811" r="22" fill="#b9bacd" stroke="#000" stroke-width="1.2"/>
<path d="M977.6 815.4a13.2 13.2 0 0 1 -11.0 13.2" fill="none" stroke="#000" stroke-width="1"/>
<rect x="920.5" y="821" width="7" height="35" fill="url(#pole)" stroke="none"/>
<ellipse cx="924.0" cy="859" rx="15.0" ry="4" fill="#c0c0d2" stroke="#000" stroke-width="1.2"/>
<path d="M909 859h30" stroke="#000" stroke-width="0.8"/>
<path d="M908 818H971V840A26 20 0 0 1 945 860z" fill="#b9bacd" stroke="#000" stroke-width="1.3"/>
<path d="M967 842l-7 11h-20" fill="none" stroke="#000" stroke-width="0.9"/>
<rect x="908" y="807" width="63" height="11" fill="#b9bacd" stroke="#000" stroke-width="1.2" />
<line x1="908" y1="812" x2="971" y2="812" stroke="#000" stroke-width="0.9"/>
<circle cx="954" cy="843" r="4" fill="none" stroke="#000" stroke-width="1"/>
<polygon points="898,488 922,457 1520,444 1496,478" fill="#9d9eb0" stroke="#000" stroke-width="1.2" stroke-linejoin="round" />
<polygon points="1496,478 1520,444 1530,767 1506,796" fill="#50515e" stroke="#000" stroke-width="1.2" stroke-linejoin="round" />
<polygon points="1503,520 1518,500 1526,740 1508,762" fill="#4a4a56" stroke="#000" stroke-width="0.9" stroke-linejoin="round" />
<polygon points="898,488 1496,476 1496,487 898,499" fill="#b9bacd" stroke="#000" stroke-width="1.2" stroke-linejoin="round" />
<polygon points="898,499 1496,487 1506,796 908,808" fill="#b9bacd" stroke="#000" stroke-width="1.2" stroke-linejoin="round" />
<line x1="1172" y1="483" x2="1172" y2="494" stroke="#000" stroke-width="1.2"/>
<line x1="1172" y1="483" x2="1177" y2="478" stroke="#000" stroke-width="1"/>
<line x1="1213" y1="474" x2="1238" y2="474" stroke="#111" stroke-width="2"/>
<line x1="1300" y1="473" x2="1322" y2="473" stroke="#111" stroke-width="2"/>
<line x1="1478" y1="469" x2="1496" y2="469" stroke="#111" stroke-width="2"/>
<line x1="1110" y1="478" x2="1128" y2="478" stroke="#111" stroke-width="2"/>
<line x1="935" y1="476" x2="948" y2="476" stroke="#111" stroke-width="2"/>
<line x1="1030" y1="479" x2="1045" y2="479" stroke="#111" stroke-width="2"/>
<polygon points="924,524 1184,519 1193,776 931,782" fill="#b9bacd" stroke="#000" stroke-width="1.6" stroke-linejoin="round" />
<polygon points="1210,519 1471,512 1479,771 1217,776" fill="#b9bacd" stroke="#000" stroke-width="1.6" stroke-linejoin="round" />
<polygon points="1153,622 1175,621 1176,672 1154,673" fill="#c4c5d6" stroke="#000" stroke-width="1" stroke-linejoin="round" />
<polygon points="1157,626 1171,625 1172,669 1158,670" fill="#b9bacd" stroke="#000" stroke-width="1" stroke-linejoin="round" />
<polygon points="1228,622 1251,621 1252,675 1229,676" fill="#c4c5d6" stroke="#000" stroke-width="1" stroke-linejoin="round" />
<polygon points="1232,626 1247,625 1248,672 1233,673" fill="#b9bacd" stroke="#000" stroke-width="1" stroke-linejoin="round" />
<rect x="908" y="561" width="34" height="34" fill="#c2c2be" stroke="#000" stroke-width="1" />
<rect x="922.0" y="561" width="6" height="34" fill="#d4d4d2" stroke="#000" stroke-width="0.6" />
<circle cx="914" cy="568" r="2.2" fill="#111" stroke="#000" stroke-width="0"/>
<circle cx="914" cy="588" r="2.2" fill="#111" stroke="#000" stroke-width="0"/>
<circle cx="936" cy="568" r="2.2" fill="#111" stroke="#000" stroke-width="0"/>
<circle cx="936" cy="588" r="2.2" fill="#111" stroke="#000" stroke-width="0"/>
<rect x="913" y="713" width="33" height="33" fill="#c2c2be" stroke="#000" stroke-width="1" />
<rect x="926.5" y="713" width="6" height="33" fill="#d4d4d2" stroke="#000" stroke-width="0.6" />
<circle cx="919" cy="720" r="2.2" fill="#111" stroke="#000" stroke-width="0"/>
<circle cx="919" cy="739" r="2.2" fill="#111" stroke="#000" stroke-width="0"/>
<circle cx="940" cy="720" r="2.2" fill="#111" stroke="#000" stroke-width="0"/>
<circle cx="940" cy="739" r="2.2" fill="#111" stroke="#000" stroke-width="0"/>
<rect x="1456" y="548" width="33" height="34" fill="#c2c2be" stroke="#000" stroke-width="1" />
<rect x="1469.5" y="548" width="6" height="34" fill="#d4d4d2" stroke="#000" stroke-width="0.6" />
<circle cx="1462" cy="555" r="2.2" fill="#111" stroke="#000" stroke-width="0"/>
<circle cx="1462" cy="575" r="2.2" fill="#111" stroke="#000" stroke-width="0"/>
<circle cx="1483" cy="555" r="2.2" fill="#111" stroke="#000" stroke-width="0"/>
<circle cx="1483" cy="575" r="2.2" fill="#111" stroke="#000" stroke-width="0"/>
<rect x="1462" y="700" width="33" height="34" fill="#c2c2be" stroke="#000" stroke-width="1" />
<rect x="1475.5" y="700" width="6" height="34" fill="#d4d4d2" stroke="#000" stroke-width="0.6" />
<circle cx="1468" cy="707" r="2.2" fill="#111" stroke="#000" stroke-width="0"/>
<circle cx="1468" cy="727" r="2.2" fill="#111" stroke="#000" stroke-width="0"/>
<circle cx="1489" cy="707" r="2.2" fill="#111" stroke="#000" stroke-width="0"/>
<circle cx="1489" cy="727" r="2.2" fill="#111" stroke="#000" stroke-width="0"/>
<polygon points="1508,508 1522,513 1524,542 1508,538" fill="#c8c9da" stroke="#000" stroke-width="0.8" stroke-linejoin="round" />
<polygon points="1508,552 1548,552 1548,593 1508,593" fill="#babbce" stroke="#000" stroke-width="1" stroke-linejoin="round" />
<polygon points="1508,552 1514,546 1555,546 1548,552" fill="#c8c9da" stroke="#000" stroke-width="0.8" stroke-linejoin="round" />
<polygon points="1548,552 1555,546 1555,588 1548,593" fill="#a0a1b4" stroke="#000" stroke-width="0.8" stroke-linejoin="round" />
<defs><linearGradient id="redg" x1="0" x2="1"><stop offset="0" stop-color="#6a0808"/><stop offset="0.5" stop-color="#a01818"/><stop offset="1" stop-color="#6a0808"/></linearGradient><linearGradient id="whg" x1="0" x2="1"><stop offset="0" stop-color="#c8c8c8"/><stop offset="0.4" stop-color="#ffffff"/><stop offset="1" stop-color="#b0b0b0"/></linearGradient></defs>
<path d="M1528 703h20v20q0 7-10 7t-10-7z" fill="url(#whg)" stroke="#000" stroke-width="1"/>
<path d="M1534 730h8l-4 10z" fill="#222" stroke="#000" stroke-width="0.5"/>
<rect x="1521" y="670" width="7" height="25" fill="#8a1010" stroke="#000" stroke-width="1" />
<rect x="1526" y="673" width="23" height="31" fill="url(#redg)" stroke="#000" stroke-width="1.2" />
<rect x="1530" y="660" width="13" height="14" fill="url(#redg)" stroke="#000" stroke-width="1.2" />
<rect x="1530" y="683" width="13" height="11" fill="none" stroke="#200" stroke-width="1.2" />
<rect x="1547" y="687" width="4" height="5" fill="#c8b020" stroke="#000" stroke-width="0" />
<rect x="1550" y="679" width="14" height="21" fill="url(#redg)" stroke="#000" stroke-width="1.2" rx="2"/>
<line x1="1559" y1="680" x2="1559" y2="699" stroke="#300" stroke-width="1"/>
<defs><linearGradient id="pole" x1="0" x2="1"><stop offset="0" stop-color="#b0b0c4"/><stop offset="0.4" stop-color="#c8c8da"/><stop offset="1" stop-color="#6a6a78"/></linearGradient></defs>
<rect x="1003" y="326" width="25" height="130" fill="url(#pole)" stroke="none" stroke-width="0" />
<polygon points="899.6,194.6 1112,189.7 1116,325.6 903.5,331.5" fill="#b9bacd" stroke="#000" stroke-width="2" stroke-linejoin="round" />
<polygon points="1112,189.7 1117,192 1121,323 1116,325.6" fill="#55556a" stroke="#000" stroke-width="0.8" stroke-linejoin="round" />
<polygon points="910,209 1098,204 1101,318 913,321" fill="#dedee2" stroke="#000" stroke-width="2" stroke-linejoin="round" />
<line x1="899.6" y1="194.6" x2="910" y2="209" stroke="#000" stroke-width="0.8"/>
<line x1="1112" y1="189.7" x2="1098" y2="204" stroke="#000" stroke-width="0.8"/>
<line x1="1116" y1="325.6" x2="1101" y2="318" stroke="#000" stroke-width="0.8"/>
<line x1="903.5" y1="331.5" x2="913" y2="321" stroke="#000" stroke-width="0.8"/>
<line x1="911" y1="232" x2="1099" y2="228" stroke="#000" stroke-width="1.8"/>
<polygon points="920,240.5 1017,238.6 1019,307 922,309" fill="#dedee2" stroke="#000" stroke-width="1.3" stroke-linejoin="round" />
<circle cx="1038" cy="253" r="6" fill="none" stroke="#000" stroke-width="1.2"/>
<circle cx="1060.5" cy="252.5" r="6" fill="none" stroke="#000" stroke-width="1.2"/>
<circle cx="1083" cy="252" r="6.5" fill="none" stroke="#000" stroke-width="1.2"/>
<circle cx="1039" cy="282.5" r="6" fill="none" stroke="#000" stroke-width="1.2"/>
<circle cx="1061" cy="282" r="6" fill="none" stroke="#000" stroke-width="1.2"/>
<circle cx="1084" cy="281" r="6" fill="none" stroke="#000" stroke-width="1.2"/>
<circle cx="1039.5" cy="305" r="4.2" fill="none" stroke="#000" stroke-width="1.2"/>
<circle cx="1062" cy="304" r="3" fill="none" stroke="#000" stroke-width="1.2"/>
<circle cx="1085" cy="304" r="2.5" fill="none" stroke="#000" stroke-width="1.2"/>
<path d="M1054 297q8-7 16 0M1077 296q8-7 16 0" fill="none" stroke="#000" stroke-width="1.2"/><path d="M1064 293q4 1 6 4M1087 292q4 1 6 4" fill="none" stroke="#b01010" stroke-width="1.6"/>
<polygon points="899,411 988,409 990,430 900,432" fill="#b9bacd" stroke="#000" stroke-width="1" stroke-linejoin="round" />
<rect x="904" y="415" width="38" height="10" fill="#1c2448" stroke="#000" stroke-width="1" rx="5"/>
<rect x="946" y="414" width="38" height="10" fill="#1c2448" stroke="#000" stroke-width="1" rx="5"/>
<polygon points="904,430 972,429 982,460 918,462" fill="#8a9282" stroke="#000" stroke-width="1" stroke-linejoin="round" />
<rect x="924" y="455" width="54" height="6" fill="#9aa292" stroke="#000" stroke-width="0.6" />
<rect x="884" y="405" width="150" height="5" fill="#7a1a1a" stroke="#000" stroke-width="0.6" />
<path d="M886 407.5h146" stroke="#e02020" stroke-width="1.6" stroke-dasharray="6 3"/>
<rect x="932" y="375" width="39" height="24" fill="#d8d8e0" stroke="#000" stroke-width="1.4" />
<line x1="933" y1="379" x2="970" y2="379" stroke="#222" stroke-width="1.1"/>
<line x1="933" y1="383" x2="970" y2="383" stroke="#222" stroke-width="1.1"/>
<line x1="933" y1="387" x2="970" y2="387" stroke="#222" stroke-width="1.1"/>
<line x1="933" y1="391" x2="970" y2="391" stroke="#222" stroke-width="1.1"/>
<line x1="933" y1="395" x2="970" y2="395" stroke="#222" stroke-width="1.1"/>
<rect x="970" y="370" width="30" height="36" fill="#8a9282" stroke="#000" stroke-width="1.3" />
<rect x="988" y="372" width="8" height="32" fill="#c8c8d4" stroke="#000" stroke-width="1" />
<rect x="972" y="374" width="6" height="28" fill="#9aa292" stroke="#000" stroke-width="0.8" />
<rect x="1019" y="410" width="12" height="46" fill="url(#pole)" stroke="#000" stroke-width="0" />
<rect x="996" y="412" width="24" height="57" fill="#b9bacd" stroke="#000" stroke-width="1.2" />
<rect x="996" y="413" width="12" height="55" fill="#a89090" stroke="#000" stroke-width="0.8" />
<rect x="998" y="468" width="31" height="7" fill="#b9bacd" stroke="#000" stroke-width="1" />
<rect x="1018" y="392" width="165" height="8" fill="#a8a9bc" stroke="#000" stroke-width="1" />
<rect x="1018" y="401" width="162" height="8" fill="#8a9282" stroke="#000" stroke-width="0.8" />
<path d="M1009 376l7-7h163v4l-6 4v15H1009z" fill="#b9bacd" stroke="#000" stroke-width="1.3"/>
<path d="M1009 376h164l6-4" fill="none" stroke="#000" stroke-width="1.1"/>
<rect x="1173" y="370" width="6" height="22" fill="#8a8a98" stroke="#000" stroke-width="1" />
<rect x="1016" y="378" width="11" height="23" fill="#b9bacd" stroke="#000" stroke-width="1.2" />
<circle cx="1021.5" cy="383" r="2.3" fill="#111" stroke="#000" stroke-width="0"/>
<rect x="1040" y="378" width="11" height="23" fill="#b9bacd" stroke="#000" stroke-width="1.2" />
<circle cx="1045.5" cy="383" r="2.3" fill="#111" stroke="#000" stroke-width="0"/>
<rect x="1064" y="378" width="11" height="23" fill="#b9bacd" stroke="#000" stroke-width="1.2" />
<circle cx="1069.5" cy="383" r="2.3" fill="#111" stroke="#000" stroke-width="0"/>
<rect x="1088" y="378" width="11" height="23" fill="#b9bacd" stroke="#000" stroke-width="1.2" />
<circle cx="1093.5" cy="383" r="2.3" fill="#111" stroke="#000" stroke-width="0"/>
<rect x="1112" y="378" width="11" height="23" fill="#b9bacd" stroke="#000" stroke-width="1.2" />
<circle cx="1117.5" cy="383" r="2.3" fill="#111" stroke="#000" stroke-width="0"/>
<rect x="1136" y="378" width="11" height="23" fill="#b9bacd" stroke="#000" stroke-width="1.2" />
<circle cx="1141.5" cy="383" r="2.3" fill="#111" stroke="#000" stroke-width="0"/>
<rect x="1160" y="378" width="11" height="23" fill="#b9bacd" stroke="#000" stroke-width="1.2" />
<circle cx="1165.5" cy="383" r="2.3" fill="#111" stroke="#000" stroke-width="0"/>
<path d="M1086 367v-10l4-3h18l3 3v10z" fill="#8a9282" stroke="#000" stroke-width="1"/>
<path d="M978 381h18l6-3h6v14h-6l-6-3h-18z" fill="#e4e4ec" stroke="#000" stroke-width="0.8"/>
<rect x="884" y="409" width="130" height="4" fill="#b0b0c0" stroke="#000" stroke-width="0.6" />
<polygon points="1045,417 1062,417 1063,480 1033,480" fill="#b9bacd" stroke="#000" stroke-width="1.2" stroke-linejoin="round" />
<line x1="1048" y1="420" x2="1048" y2="478" stroke="#000" stroke-width="0.8"/>
<rect x="1086" y="404" width="56" height="26" fill="#2e3454" stroke="#000" stroke-width="0" />
<rect x="1062" y="406" width="23" height="23" fill="#c4c4cc" stroke="#000" stroke-width="1.3" />
<circle cx="1072" cy="418" r="6" fill="#d0d0d8" stroke="#000" stroke-width="1.3"/>
<circle cx="1072" cy="418" r="3" fill="#b0b0b8" stroke="#000" stroke-width="0.8"/>
<rect x="1062" y="429" width="24" height="13" fill="#b9bacd" stroke="#000" stroke-width="1.2" />
<circle cx="1066" cy="435" r="2.2" fill="#111" stroke="#000" stroke-width="0"/>
<circle cx="1080" cy="435" r="2.2" fill="#111" stroke="#000" stroke-width="0"/>
<rect x="1088" y="405" width="12" height="6" fill="#8a9282" stroke="#000" stroke-width="0.8" />
<rect x="1114" y="405" width="8" height="6" fill="#8a9282" stroke="#000" stroke-width="0.8" />
<rect x="1099" y="405" width="13" height="10" fill="#b9bacd" stroke="#000" stroke-width="1" />
<rect x="1099" y="415" width="14" height="12" fill="#b9bacd" stroke="#000" stroke-width="1.2" />
<circle cx="1105" cy="421" r="3" fill="#aaa" stroke="#000" stroke-width="1"/>
<path d="M1115 429v-6q5-5 11 0v6z" fill="#b89890" stroke="#000" stroke-width="0.8"/>
<rect x="1124" y="408" width="13" height="23" fill="#b9bacd" stroke="#000" stroke-width="1.2" />
<circle cx="1130" cy="418" r="3" fill="#aaa" stroke="#000" stroke-width="1"/>
<rect x="1141" y="405" width="29" height="25" fill="#c0c0c6" stroke="#000" stroke-width="1.3" />
<circle cx="1154" cy="418" r="9" fill="#b8b8c0" stroke="#000" stroke-width="1.6"/>
<circle cx="1154" cy="418" r="5" fill="#a8a8b0" stroke="#000" stroke-width="0.6"/>
<rect x="1141" y="429" width="30" height="11" fill="#b9bacd" stroke="#000" stroke-width="1.2" />
<circle cx="1147" cy="434" r="2.2" fill="#111" stroke="#000" stroke-width="0"/>
<circle cx="1162" cy="434" r="2.2" fill="#111" stroke="#000" stroke-width="0"/>
<rect x="1065" y="440" width="106" height="11" fill="#b9bacd" stroke="#000" stroke-width="1.2" />
<rect x="1094" y="433" width="27" height="27" fill="#c8c8d4" stroke="#000" stroke-width="1.3" />
<circle cx="1107" cy="447" r="8" fill="#c8c8d4" stroke="#000" stroke-width="1.4"/>
<circle cx="1107" cy="447" r="5.5" fill="#c0c0cc" stroke="#000" stroke-width="1"/>
<circle cx="1097" cy="436" r="1.5" fill="none" stroke="#000" stroke-width="0.8"/>
<circle cx="1118" cy="436" r="1.5" fill="none" stroke="#000" stroke-width="0.8"/>
<circle cx="1097" cy="457" r="1.5" fill="none" stroke="#000" stroke-width="0.8"/>
<circle cx="1118" cy="457" r="1.5" fill="none" stroke="#000" stroke-width="0.8"/>
<rect x="1086" y="460" width="47" height="6" fill="#b89890" stroke="#000" stroke-width="1" />
<rect x="1086" y="466" width="44" height="12" fill="#e4e4e4" stroke="#000" stroke-width="1.3" />
<rect x="1126" y="450" width="19" height="11" fill="#e4e4e4" stroke="#000" stroke-width="1" />
<rect x="1153" y="447" width="18" height="15" fill="#b9bacd" stroke="#000" stroke-width="1" />
<rect x="1151" y="462" width="21" height="11" fill="#e4e4e4" stroke="#000" stroke-width="1.2" />
<rect x="1171" y="409" width="17" height="68" fill="#b9bacd" stroke="#000" stroke-width="1" />
<polygon points="1187,416 1236,415 1236,434 1221,434 1221,469 1187,470" fill="#b9bacd" stroke="#000" stroke-width="1" stroke-linejoin="round" />
<line x1="1189" y1="418" x2="1204" y2="468" stroke="#000" stroke-width="1.2"/>
<circle cx="1204" cy="420" r="1.5" fill="#111" stroke="#000" stroke-width="0"/>
<circle cx="1214" cy="425" r="1.5" fill="#111" stroke="#000" stroke-width="0"/>
<circle cx="1228" cy="423" r="1.5" fill="#111" stroke="#000" stroke-width="0"/>
<circle cx="1230" cy="430" r="1.5" fill="#111" stroke="#000" stroke-width="0"/>
<circle cx="1207" cy="434" r="1.5" fill="#111" stroke="#000" stroke-width="0"/>
<circle cx="1207" cy="455" r="1.5" fill="#111" stroke="#000" stroke-width="0"/>
<rect x="1165" y="396" width="62" height="12" fill="#8a9282" stroke="#000" stroke-width="0.9" />
<rect x="1225" y="369" width="12" height="40" fill="#8a9282" stroke="#000" stroke-width="1" />
<rect x="1202" y="379" width="24" height="8" fill="#e0e0e8" stroke="#000" stroke-width="0.8" />
<rect x="1237" y="379" width="14" height="8" fill="#e8e8ee" stroke="#000" stroke-width="0.8" />
<rect x="1207" y="379" width="3" height="8" fill="#a01010" stroke="#000" stroke-width="0" />
<rect x="1246" y="379" width="3" height="8" fill="#a01010" stroke="#000" stroke-width="0" />
<rect x="1222" y="451" width="10" height="17" fill="#c0c0cc" stroke="#000" stroke-width="1" />
<rect x="1230" y="445" width="7" height="25" fill="#b9bacd" stroke="#000" stroke-width="1" />
<rect x="1195" y="409" width="26" height="7" fill="#a4ac9c" stroke="#000" stroke-width="0.8" />
<defs><linearGradient id="spool" x1="0" x2="0" y1="0" y2="1"><stop offset="0" stop-color="#c8c49a"/><stop offset="0.3" stop-color="#f4f0cc"/><stop offset="1" stop-color="#c8c08a"/></linearGradient></defs>
<rect x="1360" y="294" width="26" height="90" fill="#b9bacd" stroke="#000" stroke-width="1" />
<circle cx="1372" cy="309" r="1.8" fill="#111" stroke="#000" stroke-width="0"/>
<rect x="1362" y="380" width="5" height="64" fill="#b9bacd" stroke="#000" stroke-width="1" />
<defs><linearGradient id="gcyl" x1="0" x2="1"><stop offset="0" stop-color="#6a7266"/><stop offset="0.4" stop-color="#a8b0a0"/><stop offset="1" stop-color="#5a6256"/></linearGradient></defs>
<rect x="1376" y="346" width="10" height="38" fill="url(#gcyl)" stroke="#000" stroke-width="1" />
<rect x="1375" y="346" width="12" height="6" fill="#4a4a50" stroke="#000" stroke-width="0.6" />
<ellipse cx="1280" cy="307" rx="4" ry="44" fill="#6a6a50" stroke="#000" stroke-width="0.8"/>
<ellipse cx="1315" cy="307" rx="4" ry="44" fill="#6a6a50" stroke="#000" stroke-width="0.8"/>
<ellipse cx="1350" cy="307" rx="4" ry="44" fill="#6a6a50" stroke="#000" stroke-width="0.8"/>
<rect x="1281" y="284" width="67" height="48" fill="url(#spool)" stroke="#000" stroke-width="0.9" />
<ellipse cx="1350" cy="307" rx="4" ry="44" fill="#5a5a48" stroke="#000" stroke-width="0.8"/>
<path d="M1352 298h8v20h-8q-3-10 0-20z" fill="#e8e8f0" stroke="#000" stroke-width="0.8"/>
<rect x="1268" y="290" width="5" height="20" fill="#a8a8b4" stroke="#000" stroke-width="0.9" />
<path d="M1263 276q0-3 3-3h6q3 0 3 3v14q0 2-2 2h-8q-2 0-2-2z" fill="#c4c4cc" stroke="#000" stroke-width="1"/>
<rect x="1264" y="286" width="12" height="6" fill="#9a9aa4" stroke="#000" stroke-width="0.8" />
<rect x="1261" y="308" width="20" height="43" fill="#a4a4ae" stroke="#000" stroke-width="1.3" />
<rect x="1261" y="308" width="6" height="43" fill="#8a8a94" stroke="#000" stroke-width="0.8" />
<path d="M1250 312h8v8h-8z" fill="#2a9a3a" stroke="#000" stroke-width="0.6"/>
<rect x="1247" y="315" width="3" height="2" fill="#f0f0c0" stroke="#000" stroke-width="0" />
<path d="M1250 337h8v8h-8z" fill="#2a9a3a" stroke="#000" stroke-width="0.6"/>
<rect x="1247" y="340" width="3" height="2" fill="#f0f0c0" stroke="#000" stroke-width="0" />
<rect x="1297" y="286" width="26" height="72" fill="#b9bacd" stroke="#000" stroke-width="1" />
<rect x="1295" y="293" width="14" height="18" fill="#f0ecc0" stroke="#000" stroke-width="0.8" />
<rect x="1260" y="346" width="71" height="64" fill="#b9bacd" stroke="#000" stroke-width="1.2" />
<rect x="1287" y="329" width="36" height="18" fill="#b9bacd" stroke="#000" stroke-width="1.2" />
<rect x="1260" y="353" width="23" height="32" fill="#b9bacd" stroke="#000" stroke-width="1" />
<circle cx="1265" cy="360" r="1.8" fill="#111" stroke="#000" stroke-width="0"/>
<circle cx="1277" cy="360" r="1.8" fill="#111" stroke="#000" stroke-width="0"/>
<circle cx="1265" cy="373" r="1.8" fill="#111" stroke="#000" stroke-width="0"/>
<circle cx="1277" cy="373" r="1.8" fill="#111" stroke="#000" stroke-width="0"/>
<rect x="1266" y="385" width="12" height="32" fill="#b9bacd" stroke="#000" stroke-width="0.9" />
<rect x="1290" y="354" width="40" height="12" fill="#b0b0c0" stroke="#000" stroke-width="0.9" />
<rect x="1296" y="371" width="18" height="20" fill="#f0e020" stroke="#000" stroke-width="0.8" />
<rect x="1314" y="355" width="14" height="50" fill="#c0c0cc" stroke="#000" stroke-width="0.9" />
<path d="M1331 360a8 16 0 0 1 0 32z" fill="#d4d4dc" stroke="#000" stroke-width="0.8"/>
<rect x="1300" y="337" width="25" height="8" fill="#1c2448" stroke="#000" stroke-width="0.8" rx="4"/>
<rect x="1249" y="418" width="163" height="7" fill="#b9bacd" stroke="#000" stroke-width="1" />
<rect x="1331" y="397" width="36" height="11" fill="#b9bacd" stroke="#000" stroke-width="0.9" />
<rect x="1366" y="384" width="34" height="53" fill="#b9bacd" stroke="#000" stroke-width="1" />
<rect x="1370" y="405" width="26" height="26" fill="#c4c4d2" stroke="#000" stroke-width="0.8" />
<circle cx="1377" cy="411" r="1.8" fill="#111" stroke="#000" stroke-width="0"/>
<circle cx="1389" cy="411" r="1.8" fill="#111" stroke="#000" stroke-width="0"/>
<circle cx="1377" cy="423" r="1.8" fill="#111" stroke="#000" stroke-width="0"/>
<circle cx="1389" cy="423" r="1.8" fill="#111" stroke="#000" stroke-width="0"/>
<rect x="1399" y="398" width="13" height="61" fill="#b9bacd" stroke="#000" stroke-width="0.9" />
<rect x="1282" y="420" width="50" height="10" fill="#b9bacd" stroke="#000" stroke-width="0.8" />
<rect x="1262" y="424" width="6" height="46" fill="#b9bacd" stroke="#000" stroke-width="0.8" />
<rect x="1300" y="422" width="8" height="18" fill="#b9bacd" stroke="#000" stroke-width="0.8" />
<rect x="1310" y="422" width="8" height="18" fill="#b9bacd" stroke="#000" stroke-width="0.8" />
<rect x="1294" y="440" width="25" height="21" fill="#7a8472" stroke="#000" stroke-width="0.9" />
<rect x="1369" y="442" width="25" height="18" fill="#7a8472" stroke="#000" stroke-width="0.9" />
<rect x="1335" y="425" width="29" height="20" fill="#b89890" stroke="#000" stroke-width="0.8" />
<rect x="1325" y="437" width="32" height="33" fill="#c8c8d4" stroke="#000" stroke-width="1" />
<circle cx="1341" cy="454" r="9" fill="#d4d4dc" stroke="#000" stroke-width="1"/>
<circle cx="1341" cy="454" r="6" fill="none" stroke="#000" stroke-width="0.8"/>
<rect x="1316" y="467" width="47" height="7" fill="#b89890" stroke="#000" stroke-width="0.8" />
<rect x="1280" y="460" width="130" height="6" fill="#b9bacd" stroke="#000" stroke-width="0.8" />
<rect x="1390" y="455" width="30" height="12" fill="#b9bacd" stroke="#000" stroke-width="0.8" />
<rect x="1415" y="446" width="12" height="10" fill="#b9bacd" stroke="#000" stroke-width="0.8" />
<path d="M1452 460l3-3h28l-3 4h-28z" fill="#c8c8d8" stroke="#000" stroke-width="1.3"/></svg><div class="a" style="left:0px;top:117px;width:60px;height:884px;background:#d6dbe9;"></div>
<div class="grh" style="left:2px;top:121px;width:56px"></div>
<div class="grh" style="left:2px;top:375px;width:56px"></div>
<svg class="ic" style="left:8px;top:134px;" width="20" height="20" viewBox="0 0 20 20"><circle cx="11" cy="8" r="5.5" fill="#d0e0f0" stroke="#8090a0" stroke-width="1.5"/><path d="M7 12l-5 6" stroke="#999" stroke-width="2.2"/><path d="M1 4h4M1 8h3M1 12h3" stroke="#aab" stroke-width="1"/></svg>
<svg class="ic" style="left:34px;top:134px;" width="20" height="20" viewBox="0 0 20 20"><path d="M2 4l15 14M3 12l4 4" stroke="#4a8ae0" stroke-width="1.6"/><path d="M6 17L16 5" stroke="#e0a040" stroke-width="3"/><path d="M16 5l2-2" stroke="#e03030" stroke-width="3"/><path d="M13 0h6l-3 3z" fill="#000"/></svg>
<svg class="ic" style="left:8px;top:159px;" width="20" height="20" viewBox="0 0 20 20"><rect x="4" y="4" width="12" height="12" fill="#e0e8f8" stroke="#555" stroke-width="0.8"/><path d="M1 1l4 4M19 1l-4 4M1 19l4-4M19 19l-4-4" stroke="#30b030" stroke-width="2"/></svg>
<svg class="ic" style="left:34px;top:159px;" width="20" height="20" viewBox="0 0 20 20"><path d="M8 9c-6-2-7 6-2 8s9-3 6-7" stroke="#4a8ae0" stroke-width="1.8" fill="none"/><path d="M6 17L16 5" stroke="#e0a040" stroke-width="3"/><path d="M13 0h6l-3 3z" fill="#000"/></svg>
<svg class="ic" style="left:8px;top:185px;" width="20" height="20" viewBox="0 0 20 20"><path d="M1 4h4M3 2v4" stroke="#000"/><circle cx="10" cy="9" r="5.5" fill="#c8dcf0" stroke="#888" stroke-width="1.5"/><path d="M6 13l-5 5" stroke="#999" stroke-width="2.5"/><rect x="12" y="12" width="7" height="7" fill="#666"/><path d="M13 0h6l-3 3z" fill="#000"/></svg>
<svg class="ic" style="left:34px;top:185px;" width="20" height="20" viewBox="0 0 20 20"><rect x="2" y="5" width="14" height="13" fill="#e8f0d0" stroke="#e0d020" stroke-width="2"/><path d="M5 11l4 4 8-10" stroke="#30b030" stroke-width="2.5" fill="none"/><path d="M13 0h6l-3 3z" fill="#000"/></svg>
<svg class="ic" style="left:8px;top:211px;" width="20" height="20" viewBox="0 0 20 20"><path d="M2 13l8-8 9 4-8 8z" fill="#d8e0ec" stroke="#777" stroke-width="0.7"/><path d="M6 14V2" stroke="#2060e0" stroke-width="1.8"/><path d="M6 14l8-6" stroke="#30b030" stroke-width="1.8"/><path d="M6 14l9 5" stroke="#e02020" stroke-width="1.8"/><path d="M13 0h6l-3 3z" fill="#000"/></svg>
<svg class="ic" style="left:34px;top:211px;" width="20" height="20" viewBox="0 0 20 20"><path d="M2 10c3-8 6 8 9 0s6 8 8 0" stroke="#4a8ae0" stroke-width="1.8" fill="none"/><path d="M6 17L16 5" stroke="#e0a040" stroke-width="3"/><path d="M13 0h6l-3 3z" fill="#000"/></svg>
<svg class="ic" style="left:8px;top:237px;" width="20" height="20" viewBox="0 0 20 20"><path d="M1 3h11l3 2H3z" fill="#9aa8e0"/><path d="M1 6h11l2 2H2z" fill="#c0c0d0"/><path d="M1 9h10l2 2H2z" fill="#d8d8d8" stroke="#888" stroke-width="0.5"/><ellipse cx="11" cy="15" rx="8" ry="4.5" fill="#b89070" stroke="#705040" stroke-width="0.8"/><circle cx="8" cy="16" r="1.6" fill="#2060e0"/><circle cx="12" cy="16" r="1.6" fill="#20c040"/><circle cx="14" cy="12.5" r="1.6" fill="#e03030"/><path d="M18 1L11 12" stroke="#c07030" stroke-width="1.6"/><path d="M13 0h6l-3 3z" fill="#000"/></svg>
<svg class="ic" style="left:34px;top:237px;" width="20" height="20" viewBox="0 0 20 20"><path d="M5 3h13l-4 16H1z" fill="#5a9ae8" stroke="#2a5ab0"/><path d="M6 10h10M10 3l-3 16" stroke="#cfe4ff" stroke-width="1.2"/><path d="M13 0h6l-3 3z" fill="#000"/></svg>
<svg class="ic" style="left:8px;top:262px;" width="20" height="20" viewBox="0 0 20 20"><path d="M3 8c1-5 9-6 12-2l2-2v6h-6l2-2c-2-2-6-2-7 1z" fill="#5a90d8"/><path d="M17 11c-1 5-9 6-12 2l-2 2v-6h6l-2 2c2 2 6 2 7-1z" fill="#5a90d8"/><path d="M13 0h6l-3 3z" fill="#000"/></svg>
<svg class="ic" style="left:34px;top:262px;" width="20" height="20" viewBox="0 0 20 20"><path d="M2 6l8-4 8 4v9l-8 4-8-4z" fill="#888"/><path d="M2 6l8 4 8-4" fill="#ccc"/><path d="M2 6l8-4 8 4-8 4z" fill="#ddd"/><path d="M10 10v9l8-4V6z" fill="#666"/><path d="M13 0h6l-3 3z" fill="#000"/></svg>
<svg class="ic" style="left:8px;top:288px;" width="20" height="20" viewBox="0 0 20 20"><text x="4" y="16" font-size="17" font-weight="bold" fill="#3a6ac0" font-family="Liberation Sans">?</text><path d="M13 0h6l-3 3z" fill="#000"/></svg>
<svg class="ic" style="left:34px;top:288px;" width="20" height="20" viewBox="0 0 20 20"><path d="M2 4v14M18 4v14M3 7h14" stroke="#333" stroke-width="1.2"/><path d="M3 7h14" stroke="#e0d020" stroke-width="2"/><path d="M13 0h6l-3 3z" fill="#000"/></svg>
<svg class="ic" style="left:8px;top:313px;" width="20" height="20" viewBox="0 0 20 20"><path d="M4 5h12l-2 14H6z" fill="#c8e0e8" stroke="#5a8a9a"/><rect x="3" y="3" width="14" height="3" fill="#9ab"/><path d="M8 1h4v3H8z" fill="#e0c020"/><path d="M13 0h6l-3 3z" fill="#000"/></svg>
<svg class="ic" style="left:34px;top:313px;" width="20" height="20" viewBox="0 0 20 20"><path d="M15 17c0-8-4-11-10-9l1-4-5 6 6 4-1-4c4-1 7 1 7 7z" fill="#9a9a9a"/><path d="M13 0h6l-3 3z" fill="#000"/></svg>
<svg class="ic" style="left:8px;top:340px;" width="20" height="20" viewBox="0 0 20 20"><circle cx="11" cy="10" r="7" fill="none" stroke="#a04010" stroke-width="1.5"/><path d="M4 10h14M11 3v14M6 5l10 10M16 5L6 15" stroke="#e08020" stroke-width="1.3"/><path d="M1 19l18-4" stroke="#f08020" stroke-width="3"/><rect x="1" y="1" width="3" height="18" fill="#777"/><path d="M13 0h6l-3 3z" fill="#000"/></svg>
<svg class="ic" style="left:34px;top:340px;" width="20" height="20" viewBox="0 0 20 20"><rect x="5" y="9" width="14" height="10" fill="#fff" stroke="#333"/><path d="M1 4h9l2 2h5v8H1z" fill="#f4cc6a" stroke="#b08030"/><path d="M7 4c2-3 6-3 8 0" stroke="#30a030" stroke-width="2.5" fill="none"/></svg>
<div class="a" style="left:64px;top:113px;width:24px;height:24px;background:#8a8ea2;"></div>
<svg class="ic" style="left:66px;top:115px;" width="20" height="20" viewBox="0 0 20 20"><rect x="2" y="3" width="16" height="3" fill="#4a5a88"/><rect x="2" y="9" width="16" height="3" fill="#4a5a88"/><rect x="2" y="15" width="16" height="3" fill="#4a5a88"/></svg>
<div class="a" style="left:92px;top:113px;width:24px;height:24px;background:#8a8ea2;"></div>
<svg class="ic" style="left:94px;top:115px;" width="20" height="20" viewBox="0 0 20 20"><rect x="5" y="5" width="10" height="10" fill="#e8f0fc" stroke="#888" stroke-width="0.5"/><path d="M1 1l4 4M19 1l-4 4M1 19l4-4M19 19l-4-4" stroke="#30c030" stroke-width="2"/></svg>
<div class="a" style="left:120px;top:113px;width:24px;height:24px;background:#8a8ea2;"></div>
<svg class="ic" style="left:122px;top:115px;" width="20" height="20" viewBox="0 0 20 20"><circle cx="12" cy="8" r="5.5" fill="#c8dcf0" stroke="#dde" stroke-width="1.5"/><path d="M8 12l-5 6" stroke="#ccc" stroke-width="2.5"/><path d="M1 4h5M1 8h4" stroke="#bbc" stroke-width="1"/></svg>
<div class="a" style="left:148px;top:113px;width:24px;height:24px;background:#8a8ea2;"></div>
<svg class="ic" style="left:150px;top:115px;" width="20" height="20" viewBox="0 0 20 20"><path d="M2 12l8-6 8 6-8 6z" fill="none" stroke="#666" stroke-width="0.6"/><path d="M10 12V1" stroke="#2070e0" stroke-width="2.2"/><path d="M10 12l7-6" stroke="#30b030" stroke-width="1.8"/><path d="M10 12l7 6" stroke="#e02020" stroke-width="2.2"/><circle cx="10" cy="12" r="1.8" fill="#eee" stroke="#333" stroke-width="0.5"/></svg>
<div class="a" style="left:176px;top:113px;width:24px;height:24px;background:#8a8ea2;"></div>
<svg class="ic" style="left:176px;top:113px;" width="24" height="24" viewBox="0 0 24 24"><path d="M12 12L3 7.5M12 12L21 7.5M12 12V21.5M12 12V3M12 12L3 17M12 12L21 17" fill="none" stroke="#000" stroke-width="1.3"/><polygon points="3,7.5 12,3 21,7.5 12,12" fill="#40d030" stroke="#1a9a1a" stroke-width="0.8"/><path d="M12 3L21 7.5V17L12 21.5L3 17V7.5Z" fill="none" stroke="#000" stroke-width="1.5" stroke-linejoin="round"/></svg>
<div class="a" style="left:204px;top:113px;width:24px;height:24px;background:#8a8ea2;"></div>
<svg class="ic" style="left:204px;top:113px;" width="24" height="24" viewBox="0 0 24 24"><path d="M12 12L3 7.5M12 12L21 7.5M12 12V21.5M12 12V3M12 12L3 17M12 12L21 17" fill="none" stroke="#000" stroke-width="1.3"/><polygon points="3,17 12,12 21,17 12,21.5" fill="#40d030" stroke="#1a9a1a" stroke-width="0.8"/><path d="M12 3L21 7.5V17L12 21.5L3 17V7.5Z" fill="none" stroke="#000" stroke-width="1.5" stroke-linejoin="round"/></svg>
<div class="a" style="left:232px;top:113px;width:24px;height:24px;background:#8a8ea2;"></div>
<svg class="ic" style="left:232px;top:113px;" width="24" height="24" viewBox="0 0 24 24"><path d="M12 12L3 7.5M12 12L21 7.5M12 12V21.5M12 12V3M12 12L3 17M12 12L21 17" fill="none" stroke="#000" stroke-width="1.3"/><polygon points="3,7.5 12,3 12,12 3,17" fill="#40d030" stroke="#1a9a1a" stroke-width="0.8"/><path d="M12 3L21 7.5V17L12 21.5L3 17V7.5Z" fill="none" stroke="#000" stroke-width="1.5" stroke-linejoin="round"/></svg>
<div class="a" style="left:260px;top:113px;width:24px;height:24px;background:#8a8ea2;"></div>
<svg class="ic" style="left:260px;top:113px;" width="24" height="24" viewBox="0 0 24 24"><path d="M12 12L3 7.5M12 12L21 7.5M12 12V21.5M12 12V3M12 12L3 17M12 12L21 17" fill="none" stroke="#000" stroke-width="1.3"/><polygon points="12,12 21,7.5 21,17 12,21.5" fill="#40d030" stroke="#1a9a1a" stroke-width="0.8"/><path d="M12 3L21 7.5V17L12 21.5L3 17V7.5Z" fill="none" stroke="#000" stroke-width="1.5" stroke-linejoin="round"/></svg>
<div class="a" style="left:288px;top:113px;width:24px;height:24px;background:#8a8ea2;"></div>
<svg class="ic" style="left:288px;top:113px;" width="24" height="24" viewBox="0 0 24 24"><path d="M12 12L3 7.5M12 12L21 7.5M12 12V21.5M12 12V3M12 12L3 17M12 12L21 17" fill="none" stroke="#000" stroke-width="1.3"/><polygon points="3,7.5 12,12 12,21.5 3,17" fill="#40d030" stroke="#1a9a1a" stroke-width="0.8"/><path d="M12 3L21 7.5V17L12 21.5L3 17V7.5Z" fill="none" stroke="#000" stroke-width="1.5" stroke-linejoin="round"/></svg>
<div class="a" style="left:316px;top:113px;width:24px;height:24px;background:#8a8ea2;"></div>
<svg class="ic" style="left:316px;top:113px;" width="24" height="24" viewBox="0 0 24 24"><path d="M12 12L3 7.5M12 12L21 7.5M12 12V21.5M12 12V3M12 12L3 17M12 12L21 17" fill="none" stroke="#000" stroke-width="1.3"/><polygon points="12,3 21,7.5 21,17 12,12" fill="#40d030" stroke="#1a9a1a" stroke-width="0.8"/><path d="M12 3L21 7.5V17L12 21.5L3 17V7.5Z" fill="none" stroke="#000" stroke-width="1.5" stroke-linejoin="round"/></svg>
<div class="a" style="left:344px;top:113px;width:24px;height:24px;background:#8a8ea2;"></div>
<svg class="ic" style="left:344px;top:113px;" width="24" height="24" viewBox="0 0 24 24"><polygon points="3,7.5 12,3 21,7.5 12,12" fill="#50e040"/><polygon points="3,7.5 12,12 12,21.5 3,17" fill="#30c020"/><polygon points="12,12 21,7.5 21,17 12,21.5" fill="#40d030"/><path d="M12 3L21 7.5V17L12 21.5L3 17V7.5Z M3 7.5L12 12L21 7.5M12 12V21.5" fill="none" stroke="#189018" stroke-width="1"/></svg>
<div class="a" style="left:64px;top:141px;width:24px;height:24px;background:#8a8ea2;"></div>
<svg class="ic" style="left:66px;top:143px;" width="20" height="20" viewBox="0 0 20 20"><path d="M5 4v12a5 2.5 0 0 0 10 0V4" fill="none" stroke="#222" stroke-width="1"/><ellipse cx="10" cy="4" rx="5" ry="2.5" fill="none" stroke="#222"/></svg>
<div class="a" style="left:64px;top:169px;width:24px;height:24px;background:#8a8ea2;"></div>
<svg class="ic" style="left:66px;top:171px;" width="20" height="20" viewBox="0 0 20 20"><path d="M5 4v12a5 2.5 0 0 0 10 0V4" fill="none" stroke="#222" stroke-width="1"/><ellipse cx="10" cy="4" rx="5" ry="2.5" fill="none" stroke="#222"/></svg>
<div class="a" style="left:64px;top:197px;width:24px;height:24px;background:#c8b270;border:1px solid #e0c060;"></div>
<svg class="ic" style="left:66px;top:199px;" width="20" height="20" viewBox="0 0 20 20"><path d="M5 4v12a5 2.5 0 0 0 10 0V4z" fill="#4a78c8" stroke="#223"/><ellipse cx="10" cy="4" rx="5" ry="2.5" fill="#8ab0f0" stroke="#223"/></svg>
<div class="a" style="left:64px;top:225px;width:24px;height:24px;background:#8a8ea2;"></div>
<svg class="ic" style="left:66px;top:227px;" width="20" height="20" viewBox="0 0 20 20"><path d="M5 4v12a5 2.5 0 0 0 10 0V4z" fill="#d8e4f8" stroke="#445"/><ellipse cx="10" cy="4" rx="5" ry="2.5" fill="#eef" stroke="#445"/></svg>
<div class="a" style="left:64px;top:253px;width:24px;height:24px;background:#8a8ea2;"></div>
<svg class="ic" style="left:66px;top:255px;" width="20" height="20" viewBox="0 0 20 20"><path d="M5 4v12a5 2.5 0 0 0 10 0V4" fill="none" stroke="#222" stroke-width="1"/><ellipse cx="10" cy="4" rx="5" ry="2.5" fill="none" stroke="#222"/><path d="M7 6l3 10M12 5l-2 11" stroke="#333" stroke-width="0.8"/></svg>
<svg class="ic" style="left:100px;top:850px;" width="80" height="100" viewBox="0 0 80 100"><text x="12" y="15" font-size="12" fill="#d0d0d0" font-family="Liberation Sans">Z</text><rect x="21" y="66" width="24" height="24" fill="#5a7090" stroke="#d8d8d8" stroke-width="1"/><path d="M18 90V24" stroke="#20e0e8" stroke-width="2.5"/><path d="M14 28l4-12 4 12z" fill="#20e0e8"/><path d="M21 91h28" stroke="#e01010" stroke-width="3"/><path d="M46 86l10 5-10 5z" fill="#c01010"/><path d="M22 88h26" stroke="#e0e020" stroke-width="1"/><circle cx="20" cy="91" r="4" fill="#666"/><text x="56" y="96" font-size="12" fill="#d0d0d0" font-family="Liberation Sans">X</text></svg>
<svg class="ic" style="left:889px;top:505px;" width="150" height="38" viewBox="0 0 150 38"><defs><linearGradient id="wm" x1="0" x2="1" y1="0" y2="1"><stop offset="0" stop-color="#f7a020"/><stop offset="1" stop-color="#f06a18"/></linearGradient></defs><g fill="none" stroke="url(#wm)" stroke-width="1.8" opacity="0.95"><path d="M3 12v22h14"/><path d="M7 8v24h10"/><path d="M11 4v26c3 0 5 2 6 3"/><path d="M45 12v22H31"/><path d="M41 8v24H31"/><path d="M37 4v26c-3 0-5 2-6 3"/></g><path d="M28 6c-8 0-12 6-10 12 1 3 3 5 5 5-2-3-2-7 1-10zM20 30c8 0 12-6 10-12-1-3-3-5-5-5 2 3 2 7-1 10z" fill="url(#wm)"/><ellipse cx="24" cy="34" rx="4" ry="1.6" fill="#f07020"/><text x="58" y="25" font-size="17" font-weight="bold" fill="#f4902c" font-family="Liberation Sans" opacity="0.92">智造资料网</text><text x="58" y="33" font-size="4.8" font-weight="bold" fill="#f4902c" font-family="Liberation Sans" textLength="82">INTELLIGENT MANUFACTURING DATA</text></svg>
<svg class="ic" style="left:1218px;top:840px;" width="30" height="14" viewBox="0 0 30 14"><path d="M2 9l10-4-2 8z" fill="#b02030"/><path d="M14 2l8 8M22 2l-8 8" stroke="#e8e8e8" stroke-width="1"/></svg>
<div class="a" style="left:0px;top:1001px;width:1920px;height:39px;background:#d6dbe9;"></div>
<div class="a" style="left:2px;top:1020px;width:1918px;height:1px;background:#a8a8a0;"></div>
<div class="a" style="left:0px;top:1021px;width:1920px;height:1px;background:#f4f4f8;"></div>
<div class="a" style="left:1340px;top:1003px;width:132px;height:16px;background:#ffffff;"></div>
<div class="a" style="left:1339px;top:1004px;width:1px;height:14px;background:#a8acb8;"></div>
<div class="a" style="left:1592px;top:1004px;width:1px;height:14px;background:#a8acb8;"></div>
<div class="a" style="left:1726px;top:1004px;width:1px;height:14px;background:#a8acb8;"></div>
<div class="a" style="left:1800px;top:1004px;width:1px;height:14px;background:#a8acb8;"></div>
<div class="a" style="left:1843px;top:1004px;width:1px;height:14px;background:#a8acb8;"></div>
<div class="a" style="left:1886px;top:1004px;width:1px;height:14px;background:#a8acb8;"></div>
<div class="grip" style="left:1337px;top:1004px;height:14px"></div>
<div class="grip" style="left:1657px;top:1004px;height:14px"></div>
<div class="grip" style="left:1477px;top:1004px;height:14px"></div>
<div class="t" style="left:1486px;top:1006px;font-size:13px;color:#000;">绝对 XY - 视图</div>
<div class="t" style="left:1601px;top:1005px;font-size:12px;color:#000;">绝对视图</div>
<div class="t" style="left:1668px;top:1005px;font-size:12px;color:#000;font-weight:bold">LAYER0</div>
<div class="a" style="left:1762px;top:1005px;width:32px;height:12px;background:#4a6490;"></div>
<div class="a" style="left:1805px;top:1005px;width:32px;height:12px;background:#4a6490;"></div>
<div class="a" style="left:1848px;top:1005px;width:32px;height:12px;background:#4a6490;"></div>
<svg class="ic" style="left:1894px;top:1004px;" width="14" height="14" viewBox="0 0 14 14"><circle cx="7" cy="7" r="6" fill="#2060d0"/><path d="M3 5c2-2 4 0 5-2M6 10c2 0 3 2 5 0" stroke="#30c030" stroke-width="2.5" fill="none"/></svg>
<div class="a" style="left:1132px;top:1024px;width:1px;height:14px;background:#a8acb8;"></div>
<div class="a" style="left:1176px;top:1024px;width:1px;height:14px;background:#a8acb8;"></div>
<div class="a" style="left:1207px;top:1024px;width:1px;height:14px;background:#a8acb8;"></div>
<div class="a" style="left:1237px;top:1024px;width:1px;height:14px;background:#a8acb8;"></div>
<div class="a" style="left:1268px;top:1024px;width:1px;height:14px;background:#a8acb8;"></div>
<div class="a" style="left:1299px;top:1024px;width:1px;height:14px;background:#a8acb8;"></div>
<div class="a" style="left:1330px;top:1024px;width:1px;height:14px;background:#a8acb8;"></div>
<div class="a" style="left:1361px;top:1024px;width:1px;height:14px;background:#a8acb8;"></div>
<div class="a" style="left:1392px;top:1024px;width:1px;height:14px;background:#a8acb8;"></div>
<div class="a" style="left:1423px;top:1024px;width:1px;height:14px;background:#a8acb8;"></div>
<div class="a" style="left:1454px;top:1024px;width:1px;height:14px;background:#a8acb8;"></div>
<div class="a" style="left:1592px;top:1024px;width:1px;height:14px;background:#a8acb8;"></div>
<div class="a" style="left:1654px;top:1024px;width:1px;height:14px;background:#a8acb8;"></div>
<div class="t" style="left:1141px;top:1025px;font-size:12px;color:#000;">拴牢</div>
<svg class="ic" style="left:1182px;top:1023px;" width="16" height="16" viewBox="0 0 16 16"><rect x="0.5" y="0.5" width="15" height="15" fill="#d8d0e0" stroke="#555"/><path d="M3 7c1-4 8-4 9 0M13 9c-1 4-8 4-9 0" stroke="#e04050" stroke-width="1.6" fill="none"/></svg>
<div class="a" style="left:1211px;top:1022px;width:19px;height:17px;background:#ffe070;"></div>
<svg class="ic" style="left:1213px;top:1023px;" width="16" height="16" viewBox="0 0 16 16"><path d="M2 2l6 3 5-2-2 5 3 5-6-2-4 3z" fill="#c060e0"/><path d="M8 8l6 7" stroke="#666" stroke-width="2"/></svg>
<svg class="ic" style="left:1244px;top:1023px;" width="16" height="16" viewBox="0 0 16 16"><path d="M1 8l8-6 6 4-8 6z" fill="#e8b060" stroke="#a07030" stroke-width="0.6"/><rect x="4" y="8" width="8" height="7" fill="#5a8ad8"/></svg>
<svg class="ic" style="left:1276px;top:1022px;" width="16" height="18" viewBox="0 0 16 18"><text x="2" y="15" font-size="16" font-weight="bold" fill="#3a6ac0" font-family="Liberation Sans">?</text></svg>
<svg class="ic" style="left:1305px;top:1023px;" width="18" height="16" viewBox="0 0 18 16"><rect x="3" y="1" width="7" height="7" fill="#5a8ad8" stroke="#335"/><rect x="9" y="7" width="7" height="7" fill="#8aaad0" stroke="#335"/><path d="M1 10l6-2" stroke="#e02020" stroke-width="2"/></svg>
<div class="a" style="left:1336px;top:1021px;width:17px;height:18px;background:#ffe070;"></div>
<svg class="ic" style="left:1336px;top:1022px;" width="17" height="17" viewBox="0 0 17 17"><path d="M1 5l7-4 7 4-7 4z" fill="#e040f0"/><path d="M1 5l7 4v7l-7-4z" fill="#7aaab8"/><path d="M15 5l-7 4v7l7-4z" fill="#5a8a98"/></svg>
<div class="t" style="left:1463px;top:1027px;font-size:13px;color:#000;">L3: 1.00 P3: 1.00</div>
<div class="t" style="left:1589px;top:1025px;font-size:12px;color:#000;">单位: 毫米</div>
<div class="t" style="left:1662px;top:1025px;font-size:13px"><span style="color:#e02020">X =-0636.075</span> Y = 7840.317 Z = 0000.000</div>
<svg class="ic" style="left:1370px;top:1030px;" width="14" height="10" viewBox="0 0 14 10"><rect x="1" y="1" width="10" height="8" fill="none" stroke="#666"/></svg>
<svg class="ic" style="left:1399px;top:1028px;" width="18" height="12" viewBox="0 0 18 12"><circle cx="9" cy="9" r="7" fill="none" stroke="#20a020" stroke-width="2"/></svg>
<svg class="ic" style="left:1430px;top:1030px;" width="18" height="10" viewBox="0 0 18 10"><rect x="1" y="1" width="7" height="8" fill="none" stroke="#778"/><rect x="9" y="1" width="7" height="8" fill="none" stroke="#778"/></svg>
<div class="a" style="left:1382px;top:1009px;width:183px;height:23px;background:#ffffff;border:1px solid #d8d8d8;box-shadow:0 1px 1px rgba(0,0,0,0.15)"></div>
<svg class="ic" style="left:1357px;top:1004px;" width="34" height="32" viewBox="0 0 34 32"><g transform="rotate(-14 17 16)"><rect x="4" y="3" width="26" height="26" rx="6" fill="#f05a24"/><path d="M23 9c-3-2-11-2-11 2.5 0 4 11 2 11 6.5 0 4.5-9 5-12 2" stroke="#fff" stroke-width="3.6" fill="none" stroke-linecap="round"/></g></svg>
<div class="t" style="left:1393px;top:1014px;font-size:14px;color:#1a6ad8;font-weight:bold">中</div>
<svg class="ic" style="left:1414px;top:1014px;" width="16" height="14" viewBox="0 0 16 14"><circle cx="4" cy="4" r="1.6" fill="none" stroke="#1a6ad8" stroke-width="1.2"/><path d="M11 6c1 0 1 3-2 5" stroke="#1a6ad8" stroke-width="2" fill="none"/><circle cx="10.5" cy="6" r="1.4" fill="#1a6ad8"/></svg>
<svg class="ic" style="left:1435px;top:1012px;" width="18" height="18" viewBox="0 0 18 18"><circle cx="9" cy="9" r="7.5" fill="none" stroke="#1a6ad8" stroke-width="1.8"/><circle cx="6.3" cy="7" r="1.1" fill="#1a6ad8"/><circle cx="11.7" cy="7" r="1.1" fill="#1a6ad8"/><path d="M5.5 11c2 2.5 5 2.5 7 0" stroke="#1a6ad8" stroke-width="1.5" fill="none"/></svg>
<svg class="ic" style="left:1459px;top:1012px;" width="14" height="18" viewBox="0 0 14 18"><rect x="4" y="1" width="6" height="10" rx="3" fill="#1a6ad8"/><path d="M1.5 8c0 6 11 6 11 0M7 14v3M4 17h6" stroke="#1a6ad8" stroke-width="1.5" fill="none"/></svg>
<svg class="ic" style="left:1479px;top:1014px;" width="18" height="14" viewBox="0 0 18 14"><rect x="1" y="1" width="16" height="11" rx="2" fill="none" stroke="#1a6ad8" stroke-width="1.8"/><path d="M4 5h1.5M7 5h1.5M10 5h1.5M13 5h1.5M4 8.5h10" stroke="#1a6ad8" stroke-width="1.5"/></svg>
<svg class="ic" style="left:1502px;top:1012px;" width="18" height="18" viewBox="0 0 18 18"><circle cx="8" cy="5" r="3.5" fill="#c0cce0"/><path d="M2 15c0-6 12-6 12 0z" fill="#c0cce0"/><circle cx="14" cy="14" r="3" fill="#fff"/><text x="12" y="17" font-size="6" fill="#aab" font-family="Liberation Sans">7</text></svg>
<svg class="ic" style="left:1524px;top:1012px;" width="18" height="18" viewBox="0 0 18 18"><path d="M1 5l5-3.5h6l5 3.5-2.5 4H13v8H5V9H3.5z" fill="#1a6ad8"/></svg>
<svg class="ic" style="left:1546px;top:1012px;" width="16" height="16" viewBox="0 0 16 16"><rect x="1" y="1" width="6" height="6" fill="#1a6ad8"/><rect x="9" y="1" width="6" height="6" fill="none" stroke="#1a6ad8" stroke-width="1.5"/><rect x="1" y="9" width="6" height="6" fill="#1a6ad8"/><rect x="9" y="9" width="6" height="6" fill="#1a6ad8"/></svg>
<div class="a" style="left:0px;top:1040px;width:1920px;height:8px;background:#1c1c1c;"></div>
<div class="a" style="left:48px;top:1040px;width:344px;height:8px;background:#f0f0f0;"></div>
<div class="a" style="left:638px;top:1040px;width:47px;height:8px;background:#555555;"></div>
<div class="t" style="left:1815px;top:1043px;font-size:12px;color:#ffffff;">16:46</div>
</body></html>
